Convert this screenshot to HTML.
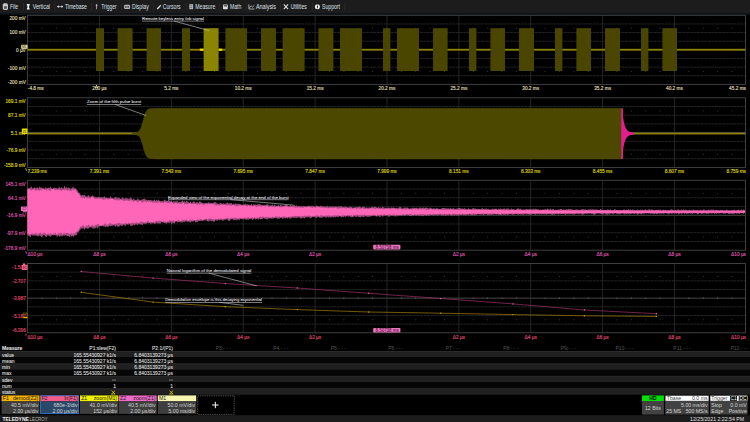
<!DOCTYPE html>
<html><head><meta charset="utf-8"><style>
html,body{margin:0;padding:0;background:#000;width:750px;height:422px;overflow:hidden;position:relative;font-family:"Liberation Sans", sans-serif;}
.ab{position:absolute;white-space:nowrap;line-height:1;}
</style></head><body>
<div class="ab" style="left:0;top:0;width:750px;height:13.5px;background:#1b1b1b;border-bottom:0.8px solid #0d1014"></div>
<svg style="position:absolute;left:0;top:0" width="750" height="422" viewBox="0 0 750 422"><line x1="27.4" y1="23.94" x2="745.5" y2="23.94" stroke="#2e2e2e" stroke-width="0.75" stroke-dasharray="3.1 0.5"/><line x1="27.4" y1="32.58" x2="745.5" y2="32.58" stroke="#2e2e2e" stroke-width="0.75" stroke-dasharray="3.1 0.5"/><line x1="27.4" y1="41.21" x2="745.5" y2="41.21" stroke="#2e2e2e" stroke-width="0.75" stroke-dasharray="3.1 0.5"/><line x1="27.4" y1="49.85" x2="745.5" y2="49.85" stroke="#5a5a5a" stroke-width="0.8"/><line x1="27.4" y1="58.49" x2="745.5" y2="58.49" stroke="#2e2e2e" stroke-width="0.75" stroke-dasharray="3.1 0.5"/><line x1="27.4" y1="67.12" x2="745.5" y2="67.12" stroke="#2e2e2e" stroke-width="0.75" stroke-dasharray="3.1 0.5"/><line x1="27.4" y1="75.76" x2="745.5" y2="75.76" stroke="#2e2e2e" stroke-width="0.75" stroke-dasharray="3.1 0.5"/><line x1="99.47" y1="15.3" x2="99.47" y2="84.4" stroke="#333333" stroke-width="0.7"/><line x1="171.35" y1="15.3" x2="171.35" y2="84.4" stroke="#333333" stroke-width="0.7"/><line x1="243.22" y1="15.3" x2="243.22" y2="84.4" stroke="#333333" stroke-width="0.7"/><line x1="315.10" y1="15.3" x2="315.10" y2="84.4" stroke="#333333" stroke-width="0.7"/><line x1="386.98" y1="15.3" x2="386.98" y2="84.4" stroke="#333333" stroke-width="0.7"/><line x1="458.85" y1="15.3" x2="458.85" y2="84.4" stroke="#333333" stroke-width="0.7"/><line x1="530.73" y1="15.3" x2="530.73" y2="84.4" stroke="#333333" stroke-width="0.7"/><line x1="602.60" y1="15.3" x2="602.60" y2="84.4" stroke="#333333" stroke-width="0.7"/><line x1="674.48" y1="15.3" x2="674.48" y2="84.4" stroke="#333333" stroke-width="0.7"/><rect x="41.48" y="27.76" width="1" height="1" fill="#3a3a3a"/><rect x="55.85" y="27.76" width="1" height="1" fill="#3a3a3a"/><rect x="70.22" y="27.76" width="1" height="1" fill="#3a3a3a"/><rect x="84.60" y="27.76" width="1" height="1" fill="#3a3a3a"/><rect x="113.35" y="27.76" width="1" height="1" fill="#3a3a3a"/><rect x="127.72" y="27.76" width="1" height="1" fill="#3a3a3a"/><rect x="142.10" y="27.76" width="1" height="1" fill="#3a3a3a"/><rect x="156.47" y="27.76" width="1" height="1" fill="#3a3a3a"/><rect x="185.22" y="27.76" width="1" height="1" fill="#3a3a3a"/><rect x="199.60" y="27.76" width="1" height="1" fill="#3a3a3a"/><rect x="213.97" y="27.76" width="1" height="1" fill="#3a3a3a"/><rect x="228.35" y="27.76" width="1" height="1" fill="#3a3a3a"/><rect x="257.10" y="27.76" width="1" height="1" fill="#3a3a3a"/><rect x="271.48" y="27.76" width="1" height="1" fill="#3a3a3a"/><rect x="285.85" y="27.76" width="1" height="1" fill="#3a3a3a"/><rect x="300.23" y="27.76" width="1" height="1" fill="#3a3a3a"/><rect x="328.98" y="27.76" width="1" height="1" fill="#3a3a3a"/><rect x="343.35" y="27.76" width="1" height="1" fill="#3a3a3a"/><rect x="357.73" y="27.76" width="1" height="1" fill="#3a3a3a"/><rect x="372.10" y="27.76" width="1" height="1" fill="#3a3a3a"/><rect x="400.85" y="27.76" width="1" height="1" fill="#3a3a3a"/><rect x="415.23" y="27.76" width="1" height="1" fill="#3a3a3a"/><rect x="429.60" y="27.76" width="1" height="1" fill="#3a3a3a"/><rect x="443.98" y="27.76" width="1" height="1" fill="#3a3a3a"/><rect x="472.73" y="27.76" width="1" height="1" fill="#3a3a3a"/><rect x="487.10" y="27.76" width="1" height="1" fill="#3a3a3a"/><rect x="501.48" y="27.76" width="1" height="1" fill="#3a3a3a"/><rect x="515.85" y="27.76" width="1" height="1" fill="#3a3a3a"/><rect x="544.60" y="27.76" width="1" height="1" fill="#3a3a3a"/><rect x="558.98" y="27.76" width="1" height="1" fill="#3a3a3a"/><rect x="573.35" y="27.76" width="1" height="1" fill="#3a3a3a"/><rect x="587.73" y="27.76" width="1" height="1" fill="#3a3a3a"/><rect x="616.48" y="27.76" width="1" height="1" fill="#3a3a3a"/><rect x="630.85" y="27.76" width="1" height="1" fill="#3a3a3a"/><rect x="645.23" y="27.76" width="1" height="1" fill="#3a3a3a"/><rect x="659.60" y="27.76" width="1" height="1" fill="#3a3a3a"/><rect x="688.35" y="27.76" width="1" height="1" fill="#3a3a3a"/><rect x="702.73" y="27.76" width="1" height="1" fill="#3a3a3a"/><rect x="717.10" y="27.76" width="1" height="1" fill="#3a3a3a"/><rect x="731.48" y="27.76" width="1" height="1" fill="#3a3a3a"/><rect x="41.48" y="70.94" width="1" height="1" fill="#3a3a3a"/><rect x="55.85" y="70.94" width="1" height="1" fill="#3a3a3a"/><rect x="70.22" y="70.94" width="1" height="1" fill="#3a3a3a"/><rect x="84.60" y="70.94" width="1" height="1" fill="#3a3a3a"/><rect x="113.35" y="70.94" width="1" height="1" fill="#3a3a3a"/><rect x="127.72" y="70.94" width="1" height="1" fill="#3a3a3a"/><rect x="142.10" y="70.94" width="1" height="1" fill="#3a3a3a"/><rect x="156.47" y="70.94" width="1" height="1" fill="#3a3a3a"/><rect x="185.22" y="70.94" width="1" height="1" fill="#3a3a3a"/><rect x="199.60" y="70.94" width="1" height="1" fill="#3a3a3a"/><rect x="213.97" y="70.94" width="1" height="1" fill="#3a3a3a"/><rect x="228.35" y="70.94" width="1" height="1" fill="#3a3a3a"/><rect x="257.10" y="70.94" width="1" height="1" fill="#3a3a3a"/><rect x="271.48" y="70.94" width="1" height="1" fill="#3a3a3a"/><rect x="285.85" y="70.94" width="1" height="1" fill="#3a3a3a"/><rect x="300.23" y="70.94" width="1" height="1" fill="#3a3a3a"/><rect x="328.98" y="70.94" width="1" height="1" fill="#3a3a3a"/><rect x="343.35" y="70.94" width="1" height="1" fill="#3a3a3a"/><rect x="357.73" y="70.94" width="1" height="1" fill="#3a3a3a"/><rect x="372.10" y="70.94" width="1" height="1" fill="#3a3a3a"/><rect x="400.85" y="70.94" width="1" height="1" fill="#3a3a3a"/><rect x="415.23" y="70.94" width="1" height="1" fill="#3a3a3a"/><rect x="429.60" y="70.94" width="1" height="1" fill="#3a3a3a"/><rect x="443.98" y="70.94" width="1" height="1" fill="#3a3a3a"/><rect x="472.73" y="70.94" width="1" height="1" fill="#3a3a3a"/><rect x="487.10" y="70.94" width="1" height="1" fill="#3a3a3a"/><rect x="501.48" y="70.94" width="1" height="1" fill="#3a3a3a"/><rect x="515.85" y="70.94" width="1" height="1" fill="#3a3a3a"/><rect x="544.60" y="70.94" width="1" height="1" fill="#3a3a3a"/><rect x="558.98" y="70.94" width="1" height="1" fill="#3a3a3a"/><rect x="573.35" y="70.94" width="1" height="1" fill="#3a3a3a"/><rect x="587.73" y="70.94" width="1" height="1" fill="#3a3a3a"/><rect x="616.48" y="70.94" width="1" height="1" fill="#3a3a3a"/><rect x="630.85" y="70.94" width="1" height="1" fill="#3a3a3a"/><rect x="645.23" y="70.94" width="1" height="1" fill="#3a3a3a"/><rect x="659.60" y="70.94" width="1" height="1" fill="#3a3a3a"/><rect x="688.35" y="70.94" width="1" height="1" fill="#3a3a3a"/><rect x="702.73" y="70.94" width="1" height="1" fill="#3a3a3a"/><rect x="717.10" y="70.94" width="1" height="1" fill="#3a3a3a"/><rect x="731.48" y="70.94" width="1" height="1" fill="#3a3a3a"/><rect x="27.4" y="15.3" width="718.1" height="69.10000000000001" fill="none" stroke="#464646" stroke-width="0.9"/><line x1="27.4" y1="106.50" x2="745.5" y2="106.50" stroke="#2e2e2e" stroke-width="0.75" stroke-dasharray="3.1 0.5"/><line x1="27.4" y1="115.20" x2="745.5" y2="115.20" stroke="#2e2e2e" stroke-width="0.75" stroke-dasharray="3.1 0.5"/><line x1="27.4" y1="123.90" x2="745.5" y2="123.90" stroke="#2e2e2e" stroke-width="0.75" stroke-dasharray="3.1 0.5"/><line x1="27.4" y1="132.60" x2="745.5" y2="132.60" stroke="#5a5a5a" stroke-width="0.8"/><line x1="27.4" y1="141.30" x2="745.5" y2="141.30" stroke="#2e2e2e" stroke-width="0.75" stroke-dasharray="3.1 0.5"/><line x1="27.4" y1="150.00" x2="745.5" y2="150.00" stroke="#2e2e2e" stroke-width="0.75" stroke-dasharray="3.1 0.5"/><line x1="27.4" y1="158.70" x2="745.5" y2="158.70" stroke="#2e2e2e" stroke-width="0.75" stroke-dasharray="3.1 0.5"/><line x1="99.47" y1="97.8" x2="99.47" y2="167.4" stroke="#333333" stroke-width="0.7"/><line x1="171.35" y1="97.8" x2="171.35" y2="167.4" stroke="#333333" stroke-width="0.7"/><line x1="243.22" y1="97.8" x2="243.22" y2="167.4" stroke="#333333" stroke-width="0.7"/><line x1="315.10" y1="97.8" x2="315.10" y2="167.4" stroke="#333333" stroke-width="0.7"/><line x1="386.98" y1="97.8" x2="386.98" y2="167.4" stroke="#333333" stroke-width="0.7"/><line x1="458.85" y1="97.8" x2="458.85" y2="167.4" stroke="#333333" stroke-width="0.7"/><line x1="530.73" y1="97.8" x2="530.73" y2="167.4" stroke="#333333" stroke-width="0.7"/><line x1="602.60" y1="97.8" x2="602.60" y2="167.4" stroke="#333333" stroke-width="0.7"/><line x1="674.48" y1="97.8" x2="674.48" y2="167.4" stroke="#333333" stroke-width="0.7"/><rect x="41.48" y="110.35" width="1" height="1" fill="#3a3a3a"/><rect x="55.85" y="110.35" width="1" height="1" fill="#3a3a3a"/><rect x="70.22" y="110.35" width="1" height="1" fill="#3a3a3a"/><rect x="84.60" y="110.35" width="1" height="1" fill="#3a3a3a"/><rect x="113.35" y="110.35" width="1" height="1" fill="#3a3a3a"/><rect x="127.72" y="110.35" width="1" height="1" fill="#3a3a3a"/><rect x="142.10" y="110.35" width="1" height="1" fill="#3a3a3a"/><rect x="156.47" y="110.35" width="1" height="1" fill="#3a3a3a"/><rect x="185.22" y="110.35" width="1" height="1" fill="#3a3a3a"/><rect x="199.60" y="110.35" width="1" height="1" fill="#3a3a3a"/><rect x="213.97" y="110.35" width="1" height="1" fill="#3a3a3a"/><rect x="228.35" y="110.35" width="1" height="1" fill="#3a3a3a"/><rect x="257.10" y="110.35" width="1" height="1" fill="#3a3a3a"/><rect x="271.48" y="110.35" width="1" height="1" fill="#3a3a3a"/><rect x="285.85" y="110.35" width="1" height="1" fill="#3a3a3a"/><rect x="300.23" y="110.35" width="1" height="1" fill="#3a3a3a"/><rect x="328.98" y="110.35" width="1" height="1" fill="#3a3a3a"/><rect x="343.35" y="110.35" width="1" height="1" fill="#3a3a3a"/><rect x="357.73" y="110.35" width="1" height="1" fill="#3a3a3a"/><rect x="372.10" y="110.35" width="1" height="1" fill="#3a3a3a"/><rect x="400.85" y="110.35" width="1" height="1" fill="#3a3a3a"/><rect x="415.23" y="110.35" width="1" height="1" fill="#3a3a3a"/><rect x="429.60" y="110.35" width="1" height="1" fill="#3a3a3a"/><rect x="443.98" y="110.35" width="1" height="1" fill="#3a3a3a"/><rect x="472.73" y="110.35" width="1" height="1" fill="#3a3a3a"/><rect x="487.10" y="110.35" width="1" height="1" fill="#3a3a3a"/><rect x="501.48" y="110.35" width="1" height="1" fill="#3a3a3a"/><rect x="515.85" y="110.35" width="1" height="1" fill="#3a3a3a"/><rect x="544.60" y="110.35" width="1" height="1" fill="#3a3a3a"/><rect x="558.98" y="110.35" width="1" height="1" fill="#3a3a3a"/><rect x="573.35" y="110.35" width="1" height="1" fill="#3a3a3a"/><rect x="587.73" y="110.35" width="1" height="1" fill="#3a3a3a"/><rect x="616.48" y="110.35" width="1" height="1" fill="#3a3a3a"/><rect x="630.85" y="110.35" width="1" height="1" fill="#3a3a3a"/><rect x="645.23" y="110.35" width="1" height="1" fill="#3a3a3a"/><rect x="659.60" y="110.35" width="1" height="1" fill="#3a3a3a"/><rect x="688.35" y="110.35" width="1" height="1" fill="#3a3a3a"/><rect x="702.73" y="110.35" width="1" height="1" fill="#3a3a3a"/><rect x="717.10" y="110.35" width="1" height="1" fill="#3a3a3a"/><rect x="731.48" y="110.35" width="1" height="1" fill="#3a3a3a"/><rect x="41.48" y="153.85" width="1" height="1" fill="#3a3a3a"/><rect x="55.85" y="153.85" width="1" height="1" fill="#3a3a3a"/><rect x="70.22" y="153.85" width="1" height="1" fill="#3a3a3a"/><rect x="84.60" y="153.85" width="1" height="1" fill="#3a3a3a"/><rect x="113.35" y="153.85" width="1" height="1" fill="#3a3a3a"/><rect x="127.72" y="153.85" width="1" height="1" fill="#3a3a3a"/><rect x="142.10" y="153.85" width="1" height="1" fill="#3a3a3a"/><rect x="156.47" y="153.85" width="1" height="1" fill="#3a3a3a"/><rect x="185.22" y="153.85" width="1" height="1" fill="#3a3a3a"/><rect x="199.60" y="153.85" width="1" height="1" fill="#3a3a3a"/><rect x="213.97" y="153.85" width="1" height="1" fill="#3a3a3a"/><rect x="228.35" y="153.85" width="1" height="1" fill="#3a3a3a"/><rect x="257.10" y="153.85" width="1" height="1" fill="#3a3a3a"/><rect x="271.48" y="153.85" width="1" height="1" fill="#3a3a3a"/><rect x="285.85" y="153.85" width="1" height="1" fill="#3a3a3a"/><rect x="300.23" y="153.85" width="1" height="1" fill="#3a3a3a"/><rect x="328.98" y="153.85" width="1" height="1" fill="#3a3a3a"/><rect x="343.35" y="153.85" width="1" height="1" fill="#3a3a3a"/><rect x="357.73" y="153.85" width="1" height="1" fill="#3a3a3a"/><rect x="372.10" y="153.85" width="1" height="1" fill="#3a3a3a"/><rect x="400.85" y="153.85" width="1" height="1" fill="#3a3a3a"/><rect x="415.23" y="153.85" width="1" height="1" fill="#3a3a3a"/><rect x="429.60" y="153.85" width="1" height="1" fill="#3a3a3a"/><rect x="443.98" y="153.85" width="1" height="1" fill="#3a3a3a"/><rect x="472.73" y="153.85" width="1" height="1" fill="#3a3a3a"/><rect x="487.10" y="153.85" width="1" height="1" fill="#3a3a3a"/><rect x="501.48" y="153.85" width="1" height="1" fill="#3a3a3a"/><rect x="515.85" y="153.85" width="1" height="1" fill="#3a3a3a"/><rect x="544.60" y="153.85" width="1" height="1" fill="#3a3a3a"/><rect x="558.98" y="153.85" width="1" height="1" fill="#3a3a3a"/><rect x="573.35" y="153.85" width="1" height="1" fill="#3a3a3a"/><rect x="587.73" y="153.85" width="1" height="1" fill="#3a3a3a"/><rect x="616.48" y="153.85" width="1" height="1" fill="#3a3a3a"/><rect x="630.85" y="153.85" width="1" height="1" fill="#3a3a3a"/><rect x="645.23" y="153.85" width="1" height="1" fill="#3a3a3a"/><rect x="659.60" y="153.85" width="1" height="1" fill="#3a3a3a"/><rect x="688.35" y="153.85" width="1" height="1" fill="#3a3a3a"/><rect x="702.73" y="153.85" width="1" height="1" fill="#3a3a3a"/><rect x="717.10" y="153.85" width="1" height="1" fill="#3a3a3a"/><rect x="731.48" y="153.85" width="1" height="1" fill="#3a3a3a"/><rect x="27.4" y="97.8" width="718.1" height="69.60000000000001" fill="none" stroke="#464646" stroke-width="0.9"/><line x1="27.4" y1="189.04" x2="745.5" y2="189.04" stroke="#2e2e2e" stroke-width="0.75" stroke-dasharray="3.1 0.5"/><line x1="27.4" y1="197.78" x2="745.5" y2="197.78" stroke="#2e2e2e" stroke-width="0.75" stroke-dasharray="3.1 0.5"/><line x1="27.4" y1="206.51" x2="745.5" y2="206.51" stroke="#2e2e2e" stroke-width="0.75" stroke-dasharray="3.1 0.5"/><line x1="27.4" y1="215.25" x2="745.5" y2="215.25" stroke="#5a5a5a" stroke-width="0.8"/><line x1="27.4" y1="223.99" x2="745.5" y2="223.99" stroke="#2e2e2e" stroke-width="0.75" stroke-dasharray="3.1 0.5"/><line x1="27.4" y1="232.72" x2="745.5" y2="232.72" stroke="#2e2e2e" stroke-width="0.75" stroke-dasharray="3.1 0.5"/><line x1="27.4" y1="241.46" x2="745.5" y2="241.46" stroke="#2e2e2e" stroke-width="0.75" stroke-dasharray="3.1 0.5"/><line x1="99.47" y1="180.3" x2="99.47" y2="250.2" stroke="#333333" stroke-width="0.7"/><line x1="171.35" y1="180.3" x2="171.35" y2="250.2" stroke="#333333" stroke-width="0.7"/><line x1="243.22" y1="180.3" x2="243.22" y2="250.2" stroke="#333333" stroke-width="0.7"/><line x1="315.10" y1="180.3" x2="315.10" y2="250.2" stroke="#333333" stroke-width="0.7"/><line x1="386.98" y1="180.3" x2="386.98" y2="250.2" stroke="#333333" stroke-width="0.7"/><line x1="458.85" y1="180.3" x2="458.85" y2="250.2" stroke="#333333" stroke-width="0.7"/><line x1="530.73" y1="180.3" x2="530.73" y2="250.2" stroke="#333333" stroke-width="0.7"/><line x1="602.60" y1="180.3" x2="602.60" y2="250.2" stroke="#333333" stroke-width="0.7"/><line x1="674.48" y1="180.3" x2="674.48" y2="250.2" stroke="#333333" stroke-width="0.7"/><rect x="41.48" y="192.91" width="1" height="1" fill="#3a3a3a"/><rect x="55.85" y="192.91" width="1" height="1" fill="#3a3a3a"/><rect x="70.22" y="192.91" width="1" height="1" fill="#3a3a3a"/><rect x="84.60" y="192.91" width="1" height="1" fill="#3a3a3a"/><rect x="113.35" y="192.91" width="1" height="1" fill="#3a3a3a"/><rect x="127.72" y="192.91" width="1" height="1" fill="#3a3a3a"/><rect x="142.10" y="192.91" width="1" height="1" fill="#3a3a3a"/><rect x="156.47" y="192.91" width="1" height="1" fill="#3a3a3a"/><rect x="185.22" y="192.91" width="1" height="1" fill="#3a3a3a"/><rect x="199.60" y="192.91" width="1" height="1" fill="#3a3a3a"/><rect x="213.97" y="192.91" width="1" height="1" fill="#3a3a3a"/><rect x="228.35" y="192.91" width="1" height="1" fill="#3a3a3a"/><rect x="257.10" y="192.91" width="1" height="1" fill="#3a3a3a"/><rect x="271.48" y="192.91" width="1" height="1" fill="#3a3a3a"/><rect x="285.85" y="192.91" width="1" height="1" fill="#3a3a3a"/><rect x="300.23" y="192.91" width="1" height="1" fill="#3a3a3a"/><rect x="328.98" y="192.91" width="1" height="1" fill="#3a3a3a"/><rect x="343.35" y="192.91" width="1" height="1" fill="#3a3a3a"/><rect x="357.73" y="192.91" width="1" height="1" fill="#3a3a3a"/><rect x="372.10" y="192.91" width="1" height="1" fill="#3a3a3a"/><rect x="400.85" y="192.91" width="1" height="1" fill="#3a3a3a"/><rect x="415.23" y="192.91" width="1" height="1" fill="#3a3a3a"/><rect x="429.60" y="192.91" width="1" height="1" fill="#3a3a3a"/><rect x="443.98" y="192.91" width="1" height="1" fill="#3a3a3a"/><rect x="472.73" y="192.91" width="1" height="1" fill="#3a3a3a"/><rect x="487.10" y="192.91" width="1" height="1" fill="#3a3a3a"/><rect x="501.48" y="192.91" width="1" height="1" fill="#3a3a3a"/><rect x="515.85" y="192.91" width="1" height="1" fill="#3a3a3a"/><rect x="544.60" y="192.91" width="1" height="1" fill="#3a3a3a"/><rect x="558.98" y="192.91" width="1" height="1" fill="#3a3a3a"/><rect x="573.35" y="192.91" width="1" height="1" fill="#3a3a3a"/><rect x="587.73" y="192.91" width="1" height="1" fill="#3a3a3a"/><rect x="616.48" y="192.91" width="1" height="1" fill="#3a3a3a"/><rect x="630.85" y="192.91" width="1" height="1" fill="#3a3a3a"/><rect x="645.23" y="192.91" width="1" height="1" fill="#3a3a3a"/><rect x="659.60" y="192.91" width="1" height="1" fill="#3a3a3a"/><rect x="688.35" y="192.91" width="1" height="1" fill="#3a3a3a"/><rect x="702.73" y="192.91" width="1" height="1" fill="#3a3a3a"/><rect x="717.10" y="192.91" width="1" height="1" fill="#3a3a3a"/><rect x="731.48" y="192.91" width="1" height="1" fill="#3a3a3a"/><rect x="41.48" y="236.59" width="1" height="1" fill="#3a3a3a"/><rect x="55.85" y="236.59" width="1" height="1" fill="#3a3a3a"/><rect x="70.22" y="236.59" width="1" height="1" fill="#3a3a3a"/><rect x="84.60" y="236.59" width="1" height="1" fill="#3a3a3a"/><rect x="113.35" y="236.59" width="1" height="1" fill="#3a3a3a"/><rect x="127.72" y="236.59" width="1" height="1" fill="#3a3a3a"/><rect x="142.10" y="236.59" width="1" height="1" fill="#3a3a3a"/><rect x="156.47" y="236.59" width="1" height="1" fill="#3a3a3a"/><rect x="185.22" y="236.59" width="1" height="1" fill="#3a3a3a"/><rect x="199.60" y="236.59" width="1" height="1" fill="#3a3a3a"/><rect x="213.97" y="236.59" width="1" height="1" fill="#3a3a3a"/><rect x="228.35" y="236.59" width="1" height="1" fill="#3a3a3a"/><rect x="257.10" y="236.59" width="1" height="1" fill="#3a3a3a"/><rect x="271.48" y="236.59" width="1" height="1" fill="#3a3a3a"/><rect x="285.85" y="236.59" width="1" height="1" fill="#3a3a3a"/><rect x="300.23" y="236.59" width="1" height="1" fill="#3a3a3a"/><rect x="328.98" y="236.59" width="1" height="1" fill="#3a3a3a"/><rect x="343.35" y="236.59" width="1" height="1" fill="#3a3a3a"/><rect x="357.73" y="236.59" width="1" height="1" fill="#3a3a3a"/><rect x="372.10" y="236.59" width="1" height="1" fill="#3a3a3a"/><rect x="400.85" y="236.59" width="1" height="1" fill="#3a3a3a"/><rect x="415.23" y="236.59" width="1" height="1" fill="#3a3a3a"/><rect x="429.60" y="236.59" width="1" height="1" fill="#3a3a3a"/><rect x="443.98" y="236.59" width="1" height="1" fill="#3a3a3a"/><rect x="472.73" y="236.59" width="1" height="1" fill="#3a3a3a"/><rect x="487.10" y="236.59" width="1" height="1" fill="#3a3a3a"/><rect x="501.48" y="236.59" width="1" height="1" fill="#3a3a3a"/><rect x="515.85" y="236.59" width="1" height="1" fill="#3a3a3a"/><rect x="544.60" y="236.59" width="1" height="1" fill="#3a3a3a"/><rect x="558.98" y="236.59" width="1" height="1" fill="#3a3a3a"/><rect x="573.35" y="236.59" width="1" height="1" fill="#3a3a3a"/><rect x="587.73" y="236.59" width="1" height="1" fill="#3a3a3a"/><rect x="616.48" y="236.59" width="1" height="1" fill="#3a3a3a"/><rect x="630.85" y="236.59" width="1" height="1" fill="#3a3a3a"/><rect x="645.23" y="236.59" width="1" height="1" fill="#3a3a3a"/><rect x="659.60" y="236.59" width="1" height="1" fill="#3a3a3a"/><rect x="688.35" y="236.59" width="1" height="1" fill="#3a3a3a"/><rect x="702.73" y="236.59" width="1" height="1" fill="#3a3a3a"/><rect x="717.10" y="236.59" width="1" height="1" fill="#3a3a3a"/><rect x="731.48" y="236.59" width="1" height="1" fill="#3a3a3a"/><rect x="27.4" y="180.3" width="718.1" height="69.89999999999998" fill="none" stroke="#464646" stroke-width="0.9"/><line x1="27.4" y1="272.16" x2="745.5" y2="272.16" stroke="#2e2e2e" stroke-width="0.75" stroke-dasharray="3.1 0.5"/><line x1="27.4" y1="280.82" x2="745.5" y2="280.82" stroke="#2e2e2e" stroke-width="0.75" stroke-dasharray="3.1 0.5"/><line x1="27.4" y1="289.49" x2="745.5" y2="289.49" stroke="#2e2e2e" stroke-width="0.75" stroke-dasharray="3.1 0.5"/><line x1="27.4" y1="298.15" x2="745.5" y2="298.15" stroke="#5a5a5a" stroke-width="0.8"/><line x1="27.4" y1="306.81" x2="745.5" y2="306.81" stroke="#2e2e2e" stroke-width="0.75" stroke-dasharray="3.1 0.5"/><line x1="27.4" y1="315.48" x2="745.5" y2="315.48" stroke="#2e2e2e" stroke-width="0.75" stroke-dasharray="3.1 0.5"/><line x1="27.4" y1="324.14" x2="745.5" y2="324.14" stroke="#2e2e2e" stroke-width="0.75" stroke-dasharray="3.1 0.5"/><line x1="99.47" y1="263.5" x2="99.47" y2="332.8" stroke="#333333" stroke-width="0.7"/><line x1="171.35" y1="263.5" x2="171.35" y2="332.8" stroke="#333333" stroke-width="0.7"/><line x1="243.22" y1="263.5" x2="243.22" y2="332.8" stroke="#333333" stroke-width="0.7"/><line x1="315.10" y1="263.5" x2="315.10" y2="332.8" stroke="#333333" stroke-width="0.7"/><line x1="386.98" y1="263.5" x2="386.98" y2="332.8" stroke="#333333" stroke-width="0.7"/><line x1="458.85" y1="263.5" x2="458.85" y2="332.8" stroke="#333333" stroke-width="0.7"/><line x1="530.73" y1="263.5" x2="530.73" y2="332.8" stroke="#333333" stroke-width="0.7"/><line x1="602.60" y1="263.5" x2="602.60" y2="332.8" stroke="#333333" stroke-width="0.7"/><line x1="674.48" y1="263.5" x2="674.48" y2="332.8" stroke="#333333" stroke-width="0.7"/><rect x="41.48" y="275.99" width="1" height="1" fill="#3a3a3a"/><rect x="55.85" y="275.99" width="1" height="1" fill="#3a3a3a"/><rect x="70.22" y="275.99" width="1" height="1" fill="#3a3a3a"/><rect x="84.60" y="275.99" width="1" height="1" fill="#3a3a3a"/><rect x="113.35" y="275.99" width="1" height="1" fill="#3a3a3a"/><rect x="127.72" y="275.99" width="1" height="1" fill="#3a3a3a"/><rect x="142.10" y="275.99" width="1" height="1" fill="#3a3a3a"/><rect x="156.47" y="275.99" width="1" height="1" fill="#3a3a3a"/><rect x="185.22" y="275.99" width="1" height="1" fill="#3a3a3a"/><rect x="199.60" y="275.99" width="1" height="1" fill="#3a3a3a"/><rect x="213.97" y="275.99" width="1" height="1" fill="#3a3a3a"/><rect x="228.35" y="275.99" width="1" height="1" fill="#3a3a3a"/><rect x="257.10" y="275.99" width="1" height="1" fill="#3a3a3a"/><rect x="271.48" y="275.99" width="1" height="1" fill="#3a3a3a"/><rect x="285.85" y="275.99" width="1" height="1" fill="#3a3a3a"/><rect x="300.23" y="275.99" width="1" height="1" fill="#3a3a3a"/><rect x="328.98" y="275.99" width="1" height="1" fill="#3a3a3a"/><rect x="343.35" y="275.99" width="1" height="1" fill="#3a3a3a"/><rect x="357.73" y="275.99" width="1" height="1" fill="#3a3a3a"/><rect x="372.10" y="275.99" width="1" height="1" fill="#3a3a3a"/><rect x="400.85" y="275.99" width="1" height="1" fill="#3a3a3a"/><rect x="415.23" y="275.99" width="1" height="1" fill="#3a3a3a"/><rect x="429.60" y="275.99" width="1" height="1" fill="#3a3a3a"/><rect x="443.98" y="275.99" width="1" height="1" fill="#3a3a3a"/><rect x="472.73" y="275.99" width="1" height="1" fill="#3a3a3a"/><rect x="487.10" y="275.99" width="1" height="1" fill="#3a3a3a"/><rect x="501.48" y="275.99" width="1" height="1" fill="#3a3a3a"/><rect x="515.85" y="275.99" width="1" height="1" fill="#3a3a3a"/><rect x="544.60" y="275.99" width="1" height="1" fill="#3a3a3a"/><rect x="558.98" y="275.99" width="1" height="1" fill="#3a3a3a"/><rect x="573.35" y="275.99" width="1" height="1" fill="#3a3a3a"/><rect x="587.73" y="275.99" width="1" height="1" fill="#3a3a3a"/><rect x="616.48" y="275.99" width="1" height="1" fill="#3a3a3a"/><rect x="630.85" y="275.99" width="1" height="1" fill="#3a3a3a"/><rect x="645.23" y="275.99" width="1" height="1" fill="#3a3a3a"/><rect x="659.60" y="275.99" width="1" height="1" fill="#3a3a3a"/><rect x="688.35" y="275.99" width="1" height="1" fill="#3a3a3a"/><rect x="702.73" y="275.99" width="1" height="1" fill="#3a3a3a"/><rect x="717.10" y="275.99" width="1" height="1" fill="#3a3a3a"/><rect x="731.48" y="275.99" width="1" height="1" fill="#3a3a3a"/><rect x="41.48" y="319.31" width="1" height="1" fill="#3a3a3a"/><rect x="55.85" y="319.31" width="1" height="1" fill="#3a3a3a"/><rect x="70.22" y="319.31" width="1" height="1" fill="#3a3a3a"/><rect x="84.60" y="319.31" width="1" height="1" fill="#3a3a3a"/><rect x="113.35" y="319.31" width="1" height="1" fill="#3a3a3a"/><rect x="127.72" y="319.31" width="1" height="1" fill="#3a3a3a"/><rect x="142.10" y="319.31" width="1" height="1" fill="#3a3a3a"/><rect x="156.47" y="319.31" width="1" height="1" fill="#3a3a3a"/><rect x="185.22" y="319.31" width="1" height="1" fill="#3a3a3a"/><rect x="199.60" y="319.31" width="1" height="1" fill="#3a3a3a"/><rect x="213.97" y="319.31" width="1" height="1" fill="#3a3a3a"/><rect x="228.35" y="319.31" width="1" height="1" fill="#3a3a3a"/><rect x="257.10" y="319.31" width="1" height="1" fill="#3a3a3a"/><rect x="271.48" y="319.31" width="1" height="1" fill="#3a3a3a"/><rect x="285.85" y="319.31" width="1" height="1" fill="#3a3a3a"/><rect x="300.23" y="319.31" width="1" height="1" fill="#3a3a3a"/><rect x="328.98" y="319.31" width="1" height="1" fill="#3a3a3a"/><rect x="343.35" y="319.31" width="1" height="1" fill="#3a3a3a"/><rect x="357.73" y="319.31" width="1" height="1" fill="#3a3a3a"/><rect x="372.10" y="319.31" width="1" height="1" fill="#3a3a3a"/><rect x="400.85" y="319.31" width="1" height="1" fill="#3a3a3a"/><rect x="415.23" y="319.31" width="1" height="1" fill="#3a3a3a"/><rect x="429.60" y="319.31" width="1" height="1" fill="#3a3a3a"/><rect x="443.98" y="319.31" width="1" height="1" fill="#3a3a3a"/><rect x="472.73" y="319.31" width="1" height="1" fill="#3a3a3a"/><rect x="487.10" y="319.31" width="1" height="1" fill="#3a3a3a"/><rect x="501.48" y="319.31" width="1" height="1" fill="#3a3a3a"/><rect x="515.85" y="319.31" width="1" height="1" fill="#3a3a3a"/><rect x="544.60" y="319.31" width="1" height="1" fill="#3a3a3a"/><rect x="558.98" y="319.31" width="1" height="1" fill="#3a3a3a"/><rect x="573.35" y="319.31" width="1" height="1" fill="#3a3a3a"/><rect x="587.73" y="319.31" width="1" height="1" fill="#3a3a3a"/><rect x="616.48" y="319.31" width="1" height="1" fill="#3a3a3a"/><rect x="630.85" y="319.31" width="1" height="1" fill="#3a3a3a"/><rect x="645.23" y="319.31" width="1" height="1" fill="#3a3a3a"/><rect x="659.60" y="319.31" width="1" height="1" fill="#3a3a3a"/><rect x="688.35" y="319.31" width="1" height="1" fill="#3a3a3a"/><rect x="702.73" y="319.31" width="1" height="1" fill="#3a3a3a"/><rect x="717.10" y="319.31" width="1" height="1" fill="#3a3a3a"/><rect x="731.48" y="319.31" width="1" height="1" fill="#3a3a3a"/><rect x="41.58" y="297.35" width="0.8" height="1.6" fill="#5a5a5a"/><rect x="55.95" y="297.35" width="0.8" height="1.6" fill="#5a5a5a"/><rect x="70.32" y="297.35" width="0.8" height="1.6" fill="#5a5a5a"/><rect x="84.70" y="297.35" width="0.8" height="1.6" fill="#5a5a5a"/><rect x="113.45" y="297.35" width="0.8" height="1.6" fill="#5a5a5a"/><rect x="127.82" y="297.35" width="0.8" height="1.6" fill="#5a5a5a"/><rect x="142.20" y="297.35" width="0.8" height="1.6" fill="#5a5a5a"/><rect x="156.57" y="297.35" width="0.8" height="1.6" fill="#5a5a5a"/><rect x="185.32" y="297.35" width="0.8" height="1.6" fill="#5a5a5a"/><rect x="199.70" y="297.35" width="0.8" height="1.6" fill="#5a5a5a"/><rect x="214.07" y="297.35" width="0.8" height="1.6" fill="#5a5a5a"/><rect x="228.45" y="297.35" width="0.8" height="1.6" fill="#5a5a5a"/><rect x="257.20" y="297.35" width="0.8" height="1.6" fill="#5a5a5a"/><rect x="271.58" y="297.35" width="0.8" height="1.6" fill="#5a5a5a"/><rect x="285.95" y="297.35" width="0.8" height="1.6" fill="#5a5a5a"/><rect x="300.33" y="297.35" width="0.8" height="1.6" fill="#5a5a5a"/><rect x="329.08" y="297.35" width="0.8" height="1.6" fill="#5a5a5a"/><rect x="343.45" y="297.35" width="0.8" height="1.6" fill="#5a5a5a"/><rect x="357.83" y="297.35" width="0.8" height="1.6" fill="#5a5a5a"/><rect x="372.20" y="297.35" width="0.8" height="1.6" fill="#5a5a5a"/><rect x="400.95" y="297.35" width="0.8" height="1.6" fill="#5a5a5a"/><rect x="415.33" y="297.35" width="0.8" height="1.6" fill="#5a5a5a"/><rect x="429.70" y="297.35" width="0.8" height="1.6" fill="#5a5a5a"/><rect x="444.08" y="297.35" width="0.8" height="1.6" fill="#5a5a5a"/><rect x="472.83" y="297.35" width="0.8" height="1.6" fill="#5a5a5a"/><rect x="487.20" y="297.35" width="0.8" height="1.6" fill="#5a5a5a"/><rect x="501.58" y="297.35" width="0.8" height="1.6" fill="#5a5a5a"/><rect x="515.95" y="297.35" width="0.8" height="1.6" fill="#5a5a5a"/><rect x="544.70" y="297.35" width="0.8" height="1.6" fill="#5a5a5a"/><rect x="559.08" y="297.35" width="0.8" height="1.6" fill="#5a5a5a"/><rect x="573.45" y="297.35" width="0.8" height="1.6" fill="#5a5a5a"/><rect x="587.83" y="297.35" width="0.8" height="1.6" fill="#5a5a5a"/><rect x="616.58" y="297.35" width="0.8" height="1.6" fill="#5a5a5a"/><rect x="630.95" y="297.35" width="0.8" height="1.6" fill="#5a5a5a"/><rect x="645.33" y="297.35" width="0.8" height="1.6" fill="#5a5a5a"/><rect x="659.70" y="297.35" width="0.8" height="1.6" fill="#5a5a5a"/><rect x="688.45" y="297.35" width="0.8" height="1.6" fill="#5a5a5a"/><rect x="702.83" y="297.35" width="0.8" height="1.6" fill="#5a5a5a"/><rect x="717.20" y="297.35" width="0.8" height="1.6" fill="#5a5a5a"/><rect x="731.58" y="297.35" width="0.8" height="1.6" fill="#5a5a5a"/><rect x="27.4" y="263.5" width="718.1" height="69.30000000000001" fill="none" stroke="#464646" stroke-width="0.9"/><rect x="27.4" y="48.80" width="718.1" height="1.8" fill="#8a8200"/><rect x="199.8" y="48.60" width="4" height="2.2" fill="#e8dc00"/><rect x="218.6" y="48.60" width="3.6" height="2.2" fill="#e8dc00"/><rect x="96" y="28.2" width="8.0" height="42.8" fill="#4a4600"/><rect x="117.6" y="28.2" width="15.0" height="42.8" fill="#4a4600"/><rect x="146.6" y="28.2" width="14.4" height="42.8" fill="#4a4600"/><rect x="182" y="28.2" width="8.0" height="42.8" fill="#4a4600"/><rect x="203.6" y="28.2" width="15.0" height="42.8" fill="#8a8400"/><rect x="225.4" y="28.2" width="21.6" height="42.8" fill="#4a4600"/><rect x="261" y="28.2" width="15.0" height="42.8" fill="#4a4600"/><rect x="282.6" y="28.2" width="22.0" height="42.8" fill="#4a4600"/><rect x="318.4" y="28.2" width="15.0" height="42.8" fill="#4a4600"/><rect x="340" y="28.2" width="22.0" height="42.8" fill="#4a4600"/><rect x="383" y="28.2" width="7.4" height="42.8" fill="#4a4600"/><rect x="397" y="28.2" width="22.0" height="42.8" fill="#4a4600"/><rect x="433" y="28.2" width="14.6" height="42.8" fill="#4a4600"/><rect x="469" y="28.2" width="7.4" height="42.8" fill="#4a4600"/><rect x="490.4" y="28.2" width="14.6" height="42.8" fill="#4a4600"/><rect x="519" y="28.2" width="15.0" height="42.8" fill="#4a4600"/><rect x="555" y="28.2" width="7.4" height="42.8" fill="#4a4600"/><rect x="576.4" y="28.2" width="14.6" height="42.8" fill="#4a4600"/><rect x="605" y="28.2" width="15.0" height="42.8" fill="#4a4600"/><rect x="641" y="28.2" width="7.4" height="42.8" fill="#4a4600"/><rect x="662.4" y="28.2" width="14.6" height="42.8" fill="#4a4600"/><rect x="27.4" y="132.75" width="718.1" height="1.7" fill="#8c8400"/><path d="M132.00,132.58 L132.50,132.57 L133.00,132.56 L133.50,132.54 L134.00,132.52 L134.50,132.49 L135.00,132.45 L135.50,132.39 L136.00,132.32 L136.50,132.21 L137.00,132.07 L137.50,131.89 L138.00,131.64 L138.50,131.30 L139.00,130.86 L139.50,130.28 L140.00,129.54 L140.50,128.60 L141.00,127.45 L141.50,126.06 L142.00,124.47 L142.50,122.70 L143.00,120.83 L143.50,118.94 L144.00,117.12 L144.50,115.45 L145.00,113.98 L145.50,112.73 L146.00,111.71 L146.50,110.89 L147.00,110.25 L147.50,109.76 L148.00,109.39 L148.50,109.10 L149.00,108.89 L149.50,108.74 L150.00,108.62 L150.50,108.54 L151.00,108.47 L151.50,108.43 L152.00,108.39 L152.50,108.37 L153.00,108.35 L153.50,108.34 L154.00,108.33 L154.50,108.32 L155.00,108.31 L155.50,108.31 L156.00,108.31 L622.00,108.30 L622.00,159.00 L156.00,158.89 L155.50,158.89 L155.00,158.89 L154.50,158.88 L154.00,158.87 L153.50,158.86 L153.00,158.85 L152.50,158.83 L152.00,158.81 L151.50,158.77 L151.00,158.73 L150.50,158.66 L150.00,158.58 L149.50,158.46 L149.00,158.31 L148.50,158.10 L148.00,157.81 L147.50,157.44 L147.00,156.95 L146.50,156.31 L146.00,155.49 L145.50,154.47 L145.00,153.22 L144.50,151.75 L144.00,150.08 L143.50,148.26 L143.00,146.37 L142.50,144.50 L142.00,142.73 L141.50,141.14 L141.00,139.75 L140.50,138.60 L140.00,137.66 L139.50,136.92 L139.00,136.34 L138.50,135.90 L138.00,135.56 L137.50,135.31 L137.00,135.13 L136.50,134.99 L136.00,134.88 L135.50,134.81 L135.00,134.75 L134.50,134.71 L134.00,134.68 L133.50,134.66 L133.00,134.64 L132.50,134.63 L132.00,134.62 Z" fill="#4c4800" stroke="#555000" stroke-width="0.4"/><path d="M622.00,108.30 L622.40,112.19 L622.80,115.47 L623.20,118.22 L623.60,120.53 L624.00,122.47 L624.40,124.11 L624.80,125.48 L625.20,126.63 L625.60,127.60 L626.00,128.41 L626.40,129.10 L626.80,129.67 L627.20,130.16 L627.60,130.56 L628.00,130.90 L628.40,131.19 L628.80,131.43 L629.20,131.63 L629.60,131.80 L630.00,131.95 L630.40,132.07 L630.80,132.17 L631.20,132.25 L631.60,132.32 L632.00,132.38 L632.40,132.43 L632.80,132.48 L633.20,132.51 L633.60,132.54 L634.00,132.57 L634.00,134.63 L633.60,134.66 L633.20,134.69 L632.80,134.72 L632.40,134.77 L632.00,134.82 L631.60,134.88 L631.20,134.95 L630.80,135.03 L630.40,135.13 L630.00,135.25 L629.60,135.40 L629.20,135.57 L628.80,135.77 L628.40,136.01 L628.00,136.30 L627.60,136.64 L627.20,137.04 L626.80,137.53 L626.40,138.10 L626.00,138.79 L625.60,139.60 L625.20,140.57 L624.80,141.72 L624.40,143.09 L624.00,144.73 L623.60,146.67 L623.20,148.98 L622.80,151.73 L622.40,155.01 L622.00,158.90 Z" fill="#e0208c"/><rect x="621.3" y="108.3" width="1.6" height="50.7" fill="#f01898"/><path d="M27.40,188.22 L28.20,187.68 L29.00,188.68 L29.80,187.98 L30.60,187.41 L31.40,186.19 L32.20,188.56 L33.00,188.50 L33.80,187.65 L34.60,187.24 L35.40,187.91 L36.20,188.39 L37.00,187.08 L37.80,188.00 L38.60,188.68 L39.40,186.57 L40.20,187.55 L41.00,187.85 L41.80,187.35 L42.60,188.08 L43.40,188.52 L44.20,188.58 L45.00,188.64 L45.80,186.77 L46.60,188.14 L47.40,188.51 L48.20,187.52 L49.00,188.12 L49.80,187.74 L50.60,186.48 L51.40,188.06 L52.20,188.66 L53.00,188.18 L53.80,188.62 L54.60,187.45 L55.40,188.13 L56.20,187.87 L57.00,188.18 L57.80,188.69 L58.60,187.66 L59.40,186.61 L60.20,188.52 L61.00,188.21 L61.80,186.65 L62.60,188.42 L63.40,188.69 L64.20,186.27 L65.00,186.27 L65.80,188.47 L66.60,186.70 L67.40,188.64 L68.20,187.01 L69.00,188.20 L69.80,188.04 L70.60,188.58 L71.40,188.55 L72.20,188.16 L73.00,186.21 L73.80,187.96 L74.60,188.37 L75.40,188.36 L76.20,189.01 L77.00,189.98 L77.80,190.85 L78.60,192.97 L79.40,192.50 L80.20,194.17 L81.00,195.79 L81.80,195.09 L82.60,195.00 L83.40,195.52 L84.20,194.86 L85.00,195.36 L85.80,196.39 L86.60,196.51 L87.40,196.47 L88.20,194.57 L89.00,196.11 L89.80,196.65 L90.60,196.66 L91.40,195.89 L92.20,195.75 L93.00,195.29 L93.80,197.10 L94.60,196.49 L95.40,197.10 L96.20,197.23 L97.00,197.31 L97.80,197.36 L98.60,196.72 L99.40,197.19 L100.20,197.51 L101.00,197.22 L101.80,196.84 L102.60,197.46 L103.40,197.62 L104.20,196.07 L105.00,197.34 L105.80,197.51 L106.60,197.43 L107.40,198.06 L108.20,198.11 L109.00,197.86 L109.80,198.13 L110.60,196.02 L111.40,197.97 L112.20,197.66 L113.00,198.50 L113.80,198.53 L114.60,197.54 L115.40,197.22 L116.20,196.39 L117.00,198.74 L117.80,197.33 L118.60,198.03 L119.40,197.87 L120.20,198.72 L121.00,198.95 L121.80,197.92 L122.60,197.47 L123.40,197.94 L124.20,199.19 L125.00,197.81 L125.80,198.57 L126.60,198.20 L127.40,197.96 L128.20,199.46 L129.00,198.26 L129.80,198.86 L130.60,197.42 L131.40,197.99 L132.20,199.52 L133.00,199.67 L133.80,198.15 L134.60,199.63 L135.40,199.93 L136.20,199.86 L137.00,200.03 L137.80,198.07 L138.60,199.61 L139.40,199.69 L140.20,200.15 L141.00,199.99 L141.80,199.80 L142.60,199.24 L143.40,199.05 L144.20,199.00 L145.00,198.52 L145.80,200.18 L146.60,199.42 L147.40,200.48 L148.20,199.91 L149.00,200.06 L149.80,200.33 L150.60,199.87 L151.40,200.28 L152.20,200.87 L153.00,200.17 L153.80,200.68 L154.60,199.01 L155.40,201.06 L156.20,200.15 L157.00,199.54 L157.80,201.13 L158.60,199.28 L159.40,200.63 L160.20,201.09 L161.00,201.28 L161.80,201.34 L162.60,200.94 L163.40,201.15 L164.20,199.78 L165.00,199.59 L165.80,200.88 L166.60,200.51 L167.40,201.29 L168.20,200.25 L169.00,199.78 L169.80,201.61 L170.60,201.14 L171.40,200.77 L172.20,201.74 L173.00,201.95 L173.80,200.72 L174.60,201.90 L175.40,200.98 L176.20,202.00 L177.00,200.25 L177.80,201.78 L178.60,202.23 L179.40,202.12 L180.20,201.79 L181.00,202.36 L181.80,201.09 L182.60,200.53 L183.40,202.12 L184.20,200.73 L185.00,202.33 L185.80,202.11 L186.60,200.82 L187.40,201.16 L188.20,202.34 L189.00,202.56 L189.80,202.76 L190.60,201.14 L191.40,202.79 L192.20,202.66 L193.00,201.62 L193.80,201.41 L194.60,201.72 L195.40,202.90 L196.20,202.56 L197.00,201.65 L197.80,202.48 L198.60,203.15 L199.40,201.30 L200.20,201.64 L201.00,201.45 L201.80,203.10 L202.60,203.08 L203.40,203.36 L204.20,203.06 L205.00,203.40 L205.80,202.47 L206.60,202.99 L207.40,203.19 L208.20,202.00 L209.00,202.39 L209.80,203.09 L210.60,203.05 L211.40,202.70 L212.20,203.29 L213.00,203.03 L213.80,202.40 L214.60,202.06 L215.40,202.14 L216.20,202.45 L217.00,203.42 L217.80,203.75 L218.60,203.89 L219.40,203.99 L220.20,202.58 L221.00,203.12 L221.80,203.57 L222.60,204.12 L223.40,202.90 L224.20,203.57 L225.00,204.16 L225.80,203.29 L226.60,203.59 L227.40,202.57 L228.20,203.16 L229.00,203.72 L229.80,203.08 L230.60,203.19 L231.40,203.08 L232.20,204.30 L233.00,204.49 L233.80,203.50 L234.60,204.49 L235.40,203.08 L236.20,204.56 L237.00,203.33 L237.80,204.28 L238.60,203.52 L239.40,203.79 L240.20,204.44 L241.00,203.90 L241.80,204.72 L242.60,204.84 L243.40,204.67 L244.20,203.99 L245.00,204.70 L245.80,203.47 L246.60,204.97 L247.40,204.06 L248.20,204.80 L249.00,204.58 L249.80,205.08 L250.60,204.94 L251.40,203.81 L252.20,205.14 L253.00,205.18 L253.80,204.06 L254.60,205.03 L255.40,204.22 L256.20,204.55 L257.00,205.06 L257.80,203.86 L258.60,204.21 L259.40,203.91 L260.20,204.52 L261.00,204.86 L261.80,204.94 L262.60,205.31 L263.40,205.41 L264.20,205.17 L265.00,204.54 L265.80,205.55 L266.60,204.29 L267.40,204.09 L268.20,205.58 L269.00,204.79 L269.80,205.64 L270.60,205.40 L271.40,205.48 L272.20,204.11 L273.00,205.78 L273.80,205.45 L274.60,204.44 L275.40,205.85 L276.20,205.88 L277.00,205.76 L277.80,205.69 L278.60,204.93 L279.40,205.93 L280.20,205.13 L281.00,204.56 L281.80,205.87 L282.60,205.65 L283.40,205.41 L284.20,205.75 L285.00,205.20 L285.80,204.98 L286.60,204.74 L287.40,205.18 L288.20,205.99 L289.00,205.91 L289.80,206.19 L290.60,204.61 L291.40,206.14 L292.20,205.90 L293.00,205.35 L293.80,206.26 L294.60,204.91 L295.40,205.93 L296.20,205.26 L297.00,205.57 L297.80,206.40 L298.60,205.63 L299.40,205.67 L300.20,206.38 L301.00,205.96 L301.80,206.44 L302.60,206.52 L303.40,205.98 L304.20,206.17 L305.00,206.22 L305.80,206.30 L306.60,206.66 L307.40,206.34 L308.20,205.19 L309.00,206.32 L309.80,205.54 L310.60,206.58 L311.40,205.55 L312.20,206.13 L313.00,205.52 L313.80,206.38 L314.60,206.61 L315.40,206.41 L316.20,205.42 L317.00,205.49 L317.80,206.10 L318.60,206.07 L319.40,206.78 L320.20,205.57 L321.00,206.22 L321.80,205.87 L322.60,206.40 L323.40,206.38 L324.20,206.50 L325.00,206.53 L325.80,207.10 L326.60,206.24 L327.40,205.61 L328.20,207.15 L329.00,206.86 L329.80,205.81 L330.60,206.89 L331.40,206.61 L332.20,206.80 L333.00,206.04 L333.80,206.69 L334.60,206.98 L335.40,206.49 L336.20,205.98 L337.00,207.34 L337.80,206.50 L338.60,206.59 L339.40,206.49 L340.20,206.34 L341.00,206.33 L341.80,206.24 L342.60,207.18 L343.40,206.65 L344.20,207.47 L345.00,206.10 L345.80,206.79 L346.60,207.11 L347.40,207.45 L348.20,207.49 L349.00,207.50 L349.80,206.59 L350.60,206.65 L351.40,206.83 L352.20,207.43 L353.00,207.65 L353.80,207.39 L354.60,207.14 L355.40,207.24 L356.20,207.36 L357.00,207.35 L357.80,207.07 L358.60,206.83 L359.40,206.25 L360.20,207.34 L361.00,207.06 L361.80,207.81 L362.60,206.67 L363.40,206.70 L364.20,206.63 L365.00,207.55 L365.80,207.74 L366.60,207.16 L367.40,207.71 L368.20,207.88 L369.00,207.25 L369.80,207.44 L370.60,207.84 L371.40,207.58 L372.20,206.45 L373.00,206.92 L373.80,207.44 L374.60,206.78 L375.40,206.98 L376.20,206.91 L377.00,207.93 L377.80,207.44 L378.60,206.76 L379.40,208.04 L380.20,207.33 L381.00,207.67 L381.80,207.98 L382.60,206.84 L383.40,207.10 L384.20,208.16 L385.00,207.34 L385.80,208.16 L386.60,207.71 L387.40,207.38 L388.20,208.23 L389.00,207.03 L389.80,208.22 L390.60,207.82 L391.40,207.54 L392.20,207.39 L393.00,208.11 L393.80,207.16 L394.60,208.07 L395.40,208.33 L396.20,207.87 L397.00,208.04 L397.80,208.34 L398.60,207.47 L399.40,207.32 L400.20,207.28 L401.00,207.12 L401.80,208.33 L402.60,208.42 L403.40,208.25 L404.20,207.38 L405.00,207.55 L405.80,207.41 L406.60,207.99 L407.40,207.30 L408.20,208.20 L409.00,208.55 L409.80,208.50 L410.60,208.30 L411.40,208.56 L412.20,208.04 L413.00,207.18 L413.80,208.43 L414.60,207.75 L415.40,207.98 L416.20,207.44 L417.00,208.14 L417.80,208.28 L418.60,208.59 L419.40,207.57 L420.20,207.55 L421.00,207.69 L421.80,208.29 L422.60,207.64 L423.40,207.35 L424.20,208.00 L425.00,208.34 L425.80,207.36 L426.60,207.70 L427.40,208.03 L428.20,208.21 L429.00,208.25 L429.80,208.57 L430.60,207.45 L431.40,208.26 L432.20,208.61 L433.00,208.82 L433.80,208.23 L434.60,208.42 L435.40,208.63 L436.20,208.55 L437.00,207.73 L437.80,208.69 L438.60,208.83 L439.40,208.91 L440.20,208.89 L441.00,208.86 L441.80,208.25 L442.60,208.04 L443.40,207.96 L444.20,207.80 L445.00,208.48 L445.80,208.00 L446.60,208.57 L447.40,208.67 L448.20,208.02 L449.00,208.93 L449.80,208.41 L450.60,207.94 L451.40,208.66 L452.20,208.46 L453.00,208.51 L453.80,208.27 L454.60,208.80 L455.40,209.07 L456.20,208.49 L457.00,208.71 L457.80,208.58 L458.60,207.75 L459.40,207.93 L460.20,207.95 L461.00,208.64 L461.80,208.46 L462.60,208.46 L463.40,208.95 L464.20,208.09 L465.00,208.71 L465.80,208.66 L466.60,209.17 L467.40,209.19 L468.20,208.55 L469.00,208.28 L469.80,209.16 L470.60,208.63 L471.40,209.26 L472.20,208.87 L473.00,208.01 L473.80,208.24 L474.60,208.81 L475.40,208.44 L476.20,208.84 L477.00,209.02 L477.80,208.74 L478.60,208.98 L479.40,209.06 L480.20,209.19 L481.00,209.28 L481.80,208.29 L482.60,208.35 L483.40,209.06 L484.20,208.89 L485.00,208.56 L485.80,209.09 L486.60,208.26 L487.40,209.23 L488.20,208.83 L489.00,209.33 L489.80,209.40 L490.60,209.22 L491.40,209.40 L492.20,208.24 L493.00,209.41 L493.80,208.72 L494.60,208.66 L495.40,208.79 L496.20,208.61 L497.00,209.42 L497.80,209.51 L498.60,208.44 L499.40,209.13 L500.20,208.46 L501.00,208.43 L501.80,209.50 L502.60,208.64 L503.40,208.65 L504.20,208.28 L505.00,208.68 L505.80,209.57 L506.60,208.33 L507.40,208.77 L508.20,208.26 L509.00,209.59 L509.80,209.37 L510.60,209.46 L511.40,208.36 L512.20,209.56 L513.00,209.07 L513.80,209.00 L514.60,209.60 L515.40,209.64 L516.20,209.25 L517.00,209.37 L517.80,208.30 L518.60,208.33 L519.40,209.29 L520.20,208.47 L521.00,208.97 L521.80,209.70 L522.60,209.60 L523.40,209.62 L524.20,209.47 L525.00,209.42 L525.80,209.57 L526.60,208.71 L527.40,209.27 L528.20,209.14 L529.00,209.35 L529.80,209.36 L530.60,208.70 L531.40,209.57 L532.20,209.51 L533.00,208.60 L533.80,209.21 L534.60,209.55 L535.40,208.69 L536.20,208.80 L537.00,209.59 L537.80,209.10 L538.60,209.82 L539.40,209.80 L540.20,209.47 L541.00,209.79 L541.80,209.80 L542.60,209.32 L543.40,209.71 L544.20,209.24 L545.00,209.47 L545.80,208.97 L546.60,209.84 L547.40,208.59 L548.20,208.95 L549.00,209.89 L549.80,209.08 L550.60,208.79 L551.40,209.82 L552.20,209.15 L553.00,209.05 L553.80,209.28 L554.60,209.88 L555.40,209.82 L556.20,209.89 L557.00,209.84 L557.80,209.63 L558.60,209.17 L559.40,209.69 L560.20,208.99 L561.00,209.20 L561.80,208.91 L562.60,209.95 L563.40,209.37 L564.20,209.55 L565.00,209.99 L565.80,209.57 L566.60,209.25 L567.40,209.83 L568.20,208.66 L569.00,208.91 L569.80,209.73 L570.60,208.79 L571.40,209.17 L572.20,209.48 L573.00,209.79 L573.80,209.88 L574.60,210.05 L575.40,209.47 L576.20,209.83 L577.00,208.83 L577.80,210.04 L578.60,209.78 L579.40,210.05 L580.20,209.90 L581.00,209.28 L581.80,209.45 L582.60,209.24 L583.40,209.11 L584.20,209.99 L585.00,208.90 L585.80,209.40 L586.60,210.10 L587.40,209.86 L588.20,209.70 L589.00,208.80 L589.80,209.88 L590.60,209.23 L591.40,209.61 L592.20,209.51 L593.00,209.34 L593.80,209.23 L594.60,209.65 L595.40,209.72 L596.20,208.83 L597.00,210.16 L597.80,209.61 L598.60,210.10 L599.40,210.09 L600.20,208.87 L601.00,209.22 L601.80,210.15 L602.60,209.85 L603.40,209.85 L604.20,210.06 L605.00,210.06 L605.80,209.99 L606.60,210.13 L607.40,209.34 L608.20,209.77 L609.00,209.60 L609.80,210.10 L610.60,209.15 L611.40,210.02 L612.20,210.24 L613.00,210.20 L613.80,209.98 L614.60,208.95 L615.40,209.49 L616.20,209.88 L617.00,210.02 L617.80,210.20 L618.60,210.19 L619.40,209.99 L620.20,210.14 L621.00,210.09 L621.80,210.27 L622.60,210.00 L623.40,209.75 L624.20,209.20 L625.00,209.93 L625.80,209.95 L626.60,209.67 L627.40,210.00 L628.20,209.28 L629.00,209.54 L629.80,210.08 L630.60,209.27 L631.40,210.17 L632.20,209.52 L633.00,209.59 L633.80,210.19 L634.60,209.90 L635.40,210.20 L636.20,209.84 L637.00,210.25 L637.80,209.35 L638.60,210.04 L639.40,210.28 L640.20,209.40 L641.00,210.03 L641.80,209.93 L642.60,209.62 L643.40,210.07 L644.20,210.26 L645.00,209.57 L645.80,209.37 L646.60,210.26 L647.40,210.09 L648.20,209.59 L649.00,209.42 L649.80,209.21 L650.60,210.10 L651.40,209.53 L652.20,209.27 L653.00,209.99 L653.80,209.98 L654.60,209.93 L655.40,210.08 L656.20,209.52 L657.00,210.40 L657.80,209.56 L658.60,209.63 L659.40,210.07 L660.20,209.35 L661.00,210.44 L661.80,210.21 L662.60,209.96 L663.40,209.38 L664.20,210.33 L665.00,210.03 L665.80,209.50 L666.60,210.44 L667.40,209.90 L668.20,210.25 L669.00,210.06 L669.80,210.45 L670.60,209.41 L671.40,209.30 L672.20,209.74 L673.00,209.46 L673.80,210.44 L674.60,210.13 L675.40,209.74 L676.20,210.48 L677.00,209.90 L677.80,209.34 L678.60,209.55 L679.40,210.19 L680.20,210.46 L681.00,209.77 L681.80,209.34 L682.60,210.30 L683.40,209.33 L684.20,209.90 L685.00,210.33 L685.80,209.35 L686.60,210.26 L687.40,210.27 L688.20,210.43 L689.00,209.98 L689.80,209.93 L690.60,210.49 L691.40,210.26 L692.20,210.45 L693.00,209.47 L693.80,209.46 L694.60,210.49 L695.40,210.07 L696.20,210.43 L697.00,210.09 L697.80,210.11 L698.60,210.41 L699.40,210.55 L700.20,209.46 L701.00,209.96 L701.80,210.41 L702.60,209.93 L703.40,209.61 L704.20,209.37 L705.00,210.42 L705.80,210.31 L706.60,210.33 L707.40,210.15 L708.20,209.73 L709.00,209.56 L709.80,210.32 L710.60,209.75 L711.40,209.46 L712.20,210.00 L713.00,209.53 L713.80,209.39 L714.60,210.44 L715.40,210.20 L716.20,209.86 L717.00,209.68 L717.80,210.27 L718.60,210.35 L719.40,210.61 L720.20,209.66 L721.00,210.36 L721.80,209.98 L722.60,209.85 L723.40,210.57 L724.20,210.52 L725.00,210.49 L725.80,210.31 L726.60,209.34 L727.40,210.13 L728.20,210.24 L729.00,210.60 L729.80,210.34 L730.60,210.62 L731.40,210.36 L732.20,210.15 L733.00,210.36 L733.80,209.91 L734.60,209.55 L735.40,210.41 L736.20,210.58 L737.00,210.34 L737.80,209.79 L738.60,209.40 L739.40,210.36 L740.20,210.47 L741.00,209.74 L741.80,209.59 L742.60,210.44 L743.40,209.43 L744.20,209.48 L745.00,210.63 L745.00,213.10 L744.20,213.04 L743.40,214.16 L742.60,212.95 L741.80,213.02 L741.00,213.20 L740.20,213.02 L739.40,214.17 L738.60,213.62 L737.80,213.15 L737.00,213.79 L736.20,213.53 L735.40,213.01 L734.60,213.76 L733.80,213.49 L733.00,214.21 L732.20,213.68 L731.40,213.66 L730.60,213.60 L729.80,214.13 L729.00,213.50 L728.20,213.92 L727.40,212.97 L726.60,213.08 L725.80,213.43 L725.00,214.07 L724.20,213.16 L723.40,213.72 L722.60,213.36 L721.80,213.19 L721.00,213.11 L720.20,213.34 L719.40,213.43 L718.60,213.59 L717.80,213.02 L717.00,213.73 L716.20,213.78 L715.40,213.15 L714.60,214.01 L713.80,213.05 L713.00,213.22 L712.20,213.38 L711.40,213.85 L710.60,213.07 L709.80,213.10 L709.00,213.93 L708.20,213.68 L707.40,213.48 L706.60,214.29 L705.80,213.09 L705.00,213.85 L704.20,213.37 L703.40,213.44 L702.60,213.79 L701.80,213.64 L701.00,213.95 L700.20,213.07 L699.40,213.36 L698.60,213.90 L697.80,213.97 L697.00,214.15 L696.20,213.11 L695.40,213.34 L694.60,213.48 L693.80,213.11 L693.00,213.50 L692.20,214.27 L691.40,213.37 L690.60,213.75 L689.80,213.48 L689.00,213.11 L688.20,214.00 L687.40,213.47 L686.60,214.29 L685.80,213.09 L685.00,214.20 L684.20,213.61 L683.40,213.12 L682.60,213.36 L681.80,214.41 L681.00,213.15 L680.20,213.52 L679.40,213.78 L678.60,214.39 L677.80,213.35 L677.00,213.35 L676.20,214.12 L675.40,213.19 L674.60,213.82 L673.80,213.16 L673.00,213.19 L672.20,213.86 L671.40,213.68 L670.60,213.15 L669.80,213.51 L669.00,214.33 L668.20,213.93 L667.40,213.38 L666.60,213.38 L665.80,213.26 L665.00,213.60 L664.20,213.17 L663.40,214.11 L662.60,213.52 L661.80,213.33 L661.00,214.47 L660.20,213.24 L659.40,213.76 L658.60,213.62 L657.80,213.74 L657.00,214.16 L656.20,214.08 L655.40,213.19 L654.60,214.18 L653.80,214.30 L653.00,213.61 L652.20,214.07 L651.40,213.51 L650.60,213.92 L649.80,213.31 L649.00,213.48 L648.20,213.42 L647.40,213.22 L646.60,213.58 L645.80,213.25 L645.00,213.41 L644.20,213.80 L643.40,213.49 L642.60,213.53 L641.80,214.18 L641.00,214.56 L640.20,213.74 L639.40,213.41 L638.60,214.26 L637.80,214.38 L637.00,214.25 L636.20,213.77 L635.40,213.33 L634.60,214.08 L633.80,213.91 L633.00,213.51 L632.20,213.60 L631.40,213.94 L630.60,213.77 L629.80,214.56 L629.00,213.53 L628.20,214.22 L627.40,213.45 L626.60,214.49 L625.80,213.37 L625.00,214.59 L624.20,214.12 L623.40,213.85 L622.60,213.31 L621.80,213.80 L621.00,213.42 L620.20,214.60 L619.40,213.80 L618.60,214.18 L617.80,213.71 L617.00,214.44 L616.20,213.39 L615.40,213.35 L614.60,213.36 L613.80,214.53 L613.00,213.45 L612.20,214.53 L611.40,213.37 L610.60,213.47 L609.80,214.49 L609.00,213.78 L608.20,214.51 L607.40,214.39 L606.60,214.46 L605.80,214.72 L605.00,213.52 L604.20,213.57 L603.40,214.59 L602.60,214.49 L601.80,214.25 L601.00,213.83 L600.20,213.89 L599.40,213.43 L598.60,213.52 L597.80,213.53 L597.00,213.50 L596.20,213.58 L595.40,214.16 L594.60,214.68 L593.80,214.75 L593.00,214.35 L592.20,213.71 L591.40,214.07 L590.60,213.50 L589.80,213.51 L589.00,213.49 L588.20,213.48 L587.40,213.95 L586.60,213.85 L585.80,213.84 L585.00,213.63 L584.20,214.03 L583.40,214.61 L582.60,214.79 L581.80,214.60 L581.00,213.65 L580.20,213.52 L579.40,213.98 L578.60,214.45 L577.80,213.63 L577.00,213.81 L576.20,213.77 L575.40,213.77 L574.60,214.66 L573.80,213.71 L573.00,214.90 L572.20,213.92 L571.40,214.06 L570.60,214.34 L569.80,213.78 L569.00,214.51 L568.20,213.59 L567.40,214.18 L566.60,213.79 L565.80,214.94 L565.00,214.21 L564.20,214.21 L563.40,213.63 L562.60,213.88 L561.80,213.96 L561.00,213.97 L560.20,213.64 L559.40,213.72 L558.60,214.64 L557.80,213.72 L557.00,214.22 L556.20,213.66 L555.40,214.07 L554.60,214.89 L553.80,213.72 L553.00,214.95 L552.20,214.71 L551.40,214.57 L550.60,214.27 L549.80,214.08 L549.00,214.33 L548.20,213.73 L547.40,214.30 L546.60,214.76 L545.80,213.78 L545.00,214.84 L544.20,213.77 L543.40,214.34 L542.60,213.92 L541.80,214.86 L541.00,213.86 L540.20,214.29 L539.40,214.51 L538.60,213.89 L537.80,214.00 L537.00,214.38 L536.20,213.81 L535.40,215.13 L534.60,214.23 L533.80,214.09 L533.00,213.90 L532.20,214.22 L531.40,214.57 L530.60,214.93 L529.80,213.95 L529.00,215.17 L528.20,213.88 L527.40,214.34 L526.60,214.68 L525.80,213.87 L525.00,214.44 L524.20,213.98 L523.40,214.85 L522.60,214.60 L521.80,214.84 L521.00,214.07 L520.20,214.63 L519.40,214.03 L518.60,214.51 L517.80,214.83 L517.00,214.02 L516.20,213.99 L515.40,214.15 L514.60,214.16 L513.80,214.39 L513.00,214.89 L512.20,214.56 L511.40,214.26 L510.60,214.14 L509.80,214.06 L509.00,214.29 L508.20,214.71 L507.40,215.02 L506.60,214.07 L505.80,214.84 L505.00,215.09 L504.20,214.42 L503.40,215.10 L502.60,214.08 L501.80,215.04 L501.00,214.72 L500.20,215.03 L499.40,214.87 L498.60,214.68 L497.80,214.33 L497.00,214.21 L496.20,214.95 L495.40,214.21 L494.60,214.29 L493.80,214.41 L493.00,214.33 L492.20,215.10 L491.40,215.00 L490.60,214.17 L489.80,214.75 L489.00,215.27 L488.20,214.41 L487.40,215.14 L486.60,214.24 L485.80,214.36 L485.00,214.39 L484.20,214.36 L483.40,215.54 L482.60,214.31 L481.80,214.29 L481.00,215.08 L480.20,214.25 L479.40,214.42 L478.60,214.28 L477.80,214.32 L477.00,214.39 L476.20,215.29 L475.40,214.43 L474.60,215.62 L473.80,214.54 L473.00,215.44 L472.20,215.02 L471.40,215.53 L470.60,214.63 L469.80,214.54 L469.00,214.61 L468.20,215.40 L467.40,214.47 L466.60,214.46 L465.80,215.81 L465.00,214.98 L464.20,215.04 L463.40,215.23 L462.60,214.43 L461.80,215.10 L461.00,214.95 L460.20,214.83 L459.40,215.27 L458.60,215.54 L457.80,215.53 L457.00,215.19 L456.20,215.67 L455.40,214.82 L454.60,215.83 L453.80,214.86 L453.00,215.96 L452.20,215.03 L451.40,215.79 L450.60,215.65 L449.80,214.59 L449.00,214.80 L448.20,215.71 L447.40,215.18 L446.60,215.04 L445.80,215.78 L445.00,215.98 L444.20,214.61 L443.40,215.49 L442.60,215.57 L441.80,215.78 L441.00,214.93 L440.20,214.81 L439.40,215.02 L438.60,214.70 L437.80,216.12 L437.00,214.87 L436.20,215.36 L435.40,214.89 L434.60,215.32 L433.80,215.50 L433.00,215.34 L432.20,215.13 L431.40,214.85 L430.60,215.31 L429.80,215.55 L429.00,215.21 L428.20,216.11 L427.40,215.01 L426.60,216.05 L425.80,215.84 L425.00,215.37 L424.20,215.18 L423.40,216.20 L422.60,216.03 L421.80,216.32 L421.00,215.19 L420.20,215.47 L419.40,216.26 L418.60,215.57 L417.80,215.01 L417.00,215.47 L416.20,215.86 L415.40,215.53 L414.60,215.11 L413.80,216.09 L413.00,215.16 L412.20,215.59 L411.40,216.24 L410.60,215.93 L409.80,215.95 L409.00,215.61 L408.20,215.16 L407.40,215.28 L406.60,215.09 L405.80,215.39 L405.00,215.50 L404.20,215.79 L403.40,215.27 L402.60,215.18 L401.80,216.17 L401.00,215.32 L400.20,215.75 L399.40,215.49 L398.60,215.44 L397.80,215.45 L397.00,216.71 L396.20,215.47 L395.40,216.53 L394.60,216.56 L393.80,215.56 L393.00,215.68 L392.20,215.92 L391.40,215.39 L390.60,215.62 L389.80,216.69 L389.00,216.62 L388.20,216.72 L387.40,215.37 L386.60,215.49 L385.80,215.67 L385.00,215.65 L384.20,215.50 L383.40,216.35 L382.60,216.76 L381.80,215.47 L381.00,215.57 L380.20,216.92 L379.40,216.94 L378.60,215.53 L377.80,216.77 L377.00,215.65 L376.20,217.00 L375.40,215.99 L374.60,216.10 L373.80,215.59 L373.00,215.69 L372.20,215.97 L371.40,216.20 L370.60,216.55 L369.80,216.35 L369.00,216.98 L368.20,216.81 L367.40,216.71 L366.60,216.58 L365.80,216.73 L365.00,215.77 L364.20,216.88 L363.40,217.02 L362.60,217.08 L361.80,216.00 L361.00,217.13 L360.20,217.13 L359.40,217.02 L358.60,217.03 L357.80,216.11 L357.00,216.97 L356.20,216.71 L355.40,216.78 L354.60,215.95 L353.80,216.92 L353.00,216.78 L352.20,217.46 L351.40,216.93 L350.60,217.25 L349.80,216.14 L349.00,216.03 L348.20,217.55 L347.40,216.06 L346.60,216.12 L345.80,217.53 L345.00,216.58 L344.20,216.18 L343.40,217.57 L342.60,216.59 L341.80,217.28 L341.00,217.58 L340.20,216.25 L339.40,216.37 L338.60,217.03 L337.80,217.37 L337.00,216.40 L336.20,216.93 L335.40,217.41 L334.60,216.60 L333.80,217.88 L333.00,216.76 L332.20,217.03 L331.40,217.47 L330.60,217.69 L329.80,216.42 L329.00,218.00 L328.20,217.22 L327.40,216.50 L326.60,217.73 L325.80,217.75 L325.00,217.09 L324.20,216.55 L323.40,216.77 L322.60,217.61 L321.80,217.84 L321.00,217.73 L320.20,217.77 L319.40,217.76 L318.60,216.86 L317.80,216.68 L317.00,217.83 L316.20,218.01 L315.40,217.56 L314.60,216.95 L313.80,216.90 L313.00,217.01 L312.20,216.87 L311.40,218.04 L310.60,218.41 L309.80,217.69 L309.00,217.04 L308.20,217.53 L307.40,217.14 L306.60,217.38 L305.80,216.97 L305.00,218.08 L304.20,218.53 L303.40,217.86 L302.60,217.76 L301.80,218.21 L301.00,218.68 L300.20,217.98 L299.40,217.55 L298.60,217.34 L297.80,217.61 L297.00,217.68 L296.20,218.18 L295.40,217.39 L294.60,217.71 L293.80,218.04 L293.00,217.87 L292.20,217.30 L291.40,218.18 L290.60,218.54 L289.80,218.96 L289.00,217.51 L288.20,217.71 L287.40,218.74 L286.60,217.64 L285.80,218.21 L285.00,218.58 L284.20,217.82 L283.40,218.65 L282.60,218.97 L281.80,217.80 L281.00,217.63 L280.20,217.98 L279.40,218.84 L278.60,218.26 L277.80,219.27 L277.00,218.30 L276.20,218.32 L275.40,217.90 L274.60,217.82 L273.80,218.82 L273.00,218.28 L272.20,218.46 L271.40,218.92 L270.60,218.37 L269.80,217.96 L269.00,219.24 L268.20,217.96 L267.40,219.59 L266.60,219.48 L265.80,218.82 L265.00,218.94 L264.20,218.17 L263.40,218.10 L262.60,218.99 L261.80,219.24 L261.00,219.53 L260.20,219.22 L259.40,218.55 L258.60,219.88 L257.80,218.27 L257.00,219.21 L256.20,218.83 L255.40,219.73 L254.60,218.38 L253.80,218.94 L253.00,219.81 L252.20,219.95 L251.40,218.60 L250.60,219.35 L249.80,219.26 L249.00,218.76 L248.20,220.13 L247.40,219.14 L246.60,219.57 L245.80,219.91 L245.00,218.78 L244.20,219.30 L243.40,219.55 L242.60,219.15 L241.80,218.99 L241.00,219.34 L240.20,218.84 L239.40,220.66 L238.60,218.92 L237.80,220.16 L237.00,219.20 L236.20,220.81 L235.40,219.77 L234.60,219.75 L233.80,220.64 L233.00,219.24 L232.20,219.37 L231.40,219.25 L230.60,219.30 L229.80,220.89 L229.00,220.99 L228.20,220.64 L227.40,219.39 L226.60,219.35 L225.80,219.40 L225.00,219.94 L224.20,219.48 L223.40,220.75 L222.60,220.39 L221.80,220.52 L221.00,219.86 L220.20,219.64 L219.40,220.40 L218.60,219.86 L217.80,220.14 L217.00,221.18 L216.20,219.84 L215.40,220.21 L214.60,221.63 L213.80,221.64 L213.00,221.56 L212.20,220.57 L211.40,221.58 L210.60,220.07 L209.80,221.41 L209.00,220.18 L208.20,221.97 L207.40,220.90 L206.60,220.40 L205.80,220.19 L205.00,220.23 L204.20,220.38 L203.40,220.60 L202.60,221.18 L201.80,220.74 L201.00,220.40 L200.20,220.96 L199.40,221.28 L198.60,220.75 L197.80,221.94 L197.00,221.56 L196.20,222.51 L195.40,222.23 L194.60,220.79 L193.80,220.96 L193.00,222.24 L192.20,221.26 L191.40,221.46 L190.60,222.76 L189.80,221.65 L189.00,222.18 L188.20,221.34 L187.40,222.31 L186.60,221.13 L185.80,221.26 L185.00,221.71 L184.20,222.11 L183.40,221.41 L182.60,222.14 L181.80,222.93 L181.00,221.26 L180.20,222.77 L179.40,221.76 L178.60,222.01 L177.80,222.92 L177.00,221.51 L176.20,221.46 L175.40,221.98 L174.60,223.42 L173.80,223.65 L173.00,222.13 L172.20,223.66 L171.40,223.63 L170.60,221.90 L169.80,223.16 L169.00,222.18 L168.20,223.19 L167.40,222.47 L166.60,223.81 L165.80,223.15 L165.00,223.27 L164.20,222.75 L163.40,222.76 L162.60,222.37 L161.80,222.22 L161.00,222.50 L160.20,224.16 L159.40,223.19 L158.60,223.67 L157.80,222.53 L157.00,224.14 L156.20,222.48 L155.40,223.82 L154.60,224.26 L153.80,222.88 L153.00,223.74 L152.20,223.02 L151.40,223.57 L150.60,224.62 L149.80,222.89 L149.00,222.99 L148.20,223.15 L147.40,223.11 L146.60,223.38 L145.80,224.46 L145.00,223.20 L144.20,224.30 L143.40,223.22 L142.60,225.19 L141.80,225.37 L141.00,223.64 L140.20,225.09 L139.40,224.06 L138.60,224.03 L137.80,224.88 L137.00,225.04 L136.20,224.08 L135.40,224.45 L134.60,225.65 L133.80,224.59 L133.00,224.68 L132.20,225.96 L131.40,226.09 L130.60,226.04 L129.80,224.10 L129.00,224.42 L128.20,224.43 L127.40,224.55 L126.60,224.26 L125.80,225.57 L125.00,226.55 L124.20,224.68 L123.40,224.45 L122.60,225.98 L121.80,225.83 L121.00,226.36 L120.20,224.64 L119.40,226.66 L118.60,226.53 L117.80,226.51 L117.00,226.64 L116.20,225.02 L115.40,226.90 L114.60,225.91 L113.80,225.06 L113.00,225.43 L112.20,226.01 L111.40,225.72 L110.60,226.24 L109.80,226.04 L109.00,225.67 L108.20,227.30 L107.40,227.04 L106.60,226.04 L105.80,227.45 L105.00,226.54 L104.20,226.41 L103.40,226.58 L102.60,225.84 L101.80,226.07 L101.00,226.36 L100.20,226.17 L99.40,226.18 L98.60,226.61 L97.80,228.15 L97.00,228.51 L96.20,226.33 L95.40,228.57 L94.60,228.61 L93.80,228.21 L93.00,228.96 L92.20,227.53 L91.40,227.40 L90.60,227.18 L89.80,227.51 L89.00,227.71 L88.20,229.34 L87.40,228.52 L86.60,228.44 L85.80,227.85 L85.00,229.52 L84.20,229.34 L83.40,228.30 L82.60,228.28 L81.80,229.14 L81.00,227.86 L80.20,230.16 L79.40,230.57 L78.60,232.49 L77.80,231.78 L77.00,235.19 L76.20,234.85 L75.40,235.61 L74.60,235.31 L73.80,237.02 L73.00,236.26 L72.20,235.96 L71.40,236.85 L70.60,235.05 L69.80,237.30 L69.00,236.76 L68.20,235.76 L67.40,236.30 L66.60,235.76 L65.80,235.14 L65.00,235.47 L64.20,235.68 L63.40,235.28 L62.60,235.87 L61.80,236.78 L61.00,235.17 L60.20,236.66 L59.40,236.41 L58.60,234.91 L57.80,237.31 L57.00,235.25 L56.20,235.78 L55.40,235.01 L54.60,235.05 L53.80,235.47 L53.00,234.93 L52.20,234.95 L51.40,235.56 L50.60,236.69 L49.80,236.16 L49.00,236.01 L48.20,235.25 L47.40,235.19 L46.60,237.06 L45.80,236.99 L45.00,235.68 L44.20,235.22 L43.40,235.00 L42.60,236.32 L41.80,237.47 L41.00,236.31 L40.20,235.70 L39.40,235.36 L38.60,236.32 L37.80,236.61 L37.00,235.30 L36.20,236.03 L35.40,235.33 L34.60,235.63 L33.80,234.94 L33.00,236.05 L32.20,235.01 L31.40,234.93 L30.60,237.30 L29.80,236.85 L29.00,235.64 L28.20,235.47 L27.40,235.05 Z" fill="#a44c80"/><path d="M27.40,190.36 L28.20,188.94 L29.00,188.97 L29.80,189.10 L30.60,190.19 L31.40,190.86 L32.20,189.54 L33.00,190.33 L33.80,188.94 L34.60,189.55 L35.40,190.71 L36.20,190.06 L37.00,191.15 L37.80,189.16 L38.60,190.63 L39.40,190.47 L40.20,190.82 L41.00,188.95 L41.80,190.77 L42.60,188.85 L43.40,188.94 L44.20,189.74 L45.00,190.12 L45.80,189.47 L46.60,191.10 L47.40,189.36 L48.20,188.81 L49.00,191.09 L49.80,190.42 L50.60,190.90 L51.40,189.05 L52.20,189.30 L53.00,188.80 L53.80,188.86 L54.60,189.41 L55.40,190.84 L56.20,189.01 L57.00,190.79 L57.80,190.07 L58.60,190.07 L59.40,189.43 L60.20,190.08 L61.00,190.75 L61.80,190.76 L62.60,189.65 L63.40,189.42 L64.20,191.05 L65.00,189.33 L65.80,190.30 L66.60,190.37 L67.40,190.98 L68.20,189.23 L69.00,191.13 L69.80,190.54 L70.60,190.97 L71.40,191.15 L72.20,189.11 L73.00,190.06 L73.80,190.78 L74.60,189.38 L75.40,189.11 L76.20,191.05 L77.00,192.00 L77.80,192.99 L78.60,193.48 L79.40,194.99 L80.20,195.60 L81.00,198.07 L81.80,198.47 L82.60,197.58 L83.40,197.55 L84.20,198.72 L85.00,198.54 L85.80,196.77 L86.60,198.52 L87.40,198.29 L88.20,197.31 L89.00,199.18 L89.80,198.12 L90.60,198.67 L91.40,197.08 L92.20,197.25 L93.00,197.40 L93.80,197.85 L94.60,199.18 L95.40,198.66 L96.20,198.99 L97.00,198.92 L97.80,197.67 L98.60,198.84 L99.40,198.84 L100.20,197.81 L101.00,199.48 L101.80,198.60 L102.60,199.53 L103.40,200.04 L104.20,199.10 L105.00,199.59 L105.80,199.68 L106.60,198.27 L107.40,198.78 L108.20,200.21 L109.00,198.97 L109.80,198.96 L110.60,198.97 L111.40,198.48 L112.20,198.98 L113.00,198.79 L113.80,199.31 L114.60,200.35 L115.40,199.61 L116.20,200.39 L117.00,200.81 L117.80,199.21 L118.60,200.72 L119.40,200.50 L120.20,199.36 L121.00,200.33 L121.80,200.23 L122.60,200.31 L123.40,200.86 L124.20,200.89 L125.00,200.44 L125.80,201.07 L126.60,199.79 L127.40,200.74 L128.20,201.01 L129.00,200.73 L129.80,201.57 L130.60,199.77 L131.40,200.73 L132.20,200.27 L133.00,201.88 L133.80,201.79 L134.60,200.99 L135.40,200.96 L136.20,200.73 L137.00,201.86 L137.80,202.04 L138.60,202.28 L139.40,200.83 L140.20,200.90 L141.00,201.41 L141.80,202.22 L142.60,202.38 L143.40,201.99 L144.20,201.12 L145.00,201.55 L145.80,202.62 L146.60,201.81 L147.40,201.14 L148.20,202.60 L149.00,201.20 L149.80,201.34 L150.60,202.41 L151.40,201.70 L152.20,202.93 L153.00,202.76 L153.80,201.87 L154.60,202.86 L155.40,202.95 L156.20,201.98 L157.00,203.18 L157.80,202.33 L158.60,202.61 L159.40,201.45 L160.20,202.69 L161.00,202.71 L161.80,202.53 L162.60,202.72 L163.40,203.46 L164.20,202.08 L165.00,202.27 L165.80,202.53 L166.60,202.19 L167.40,203.11 L168.20,202.81 L169.00,203.46 L169.80,202.48 L170.60,202.38 L171.40,202.27 L172.20,202.30 L173.00,203.79 L173.80,203.89 L174.60,203.57 L175.40,202.90 L176.20,202.76 L177.00,204.10 L177.80,203.86 L178.60,203.04 L179.40,204.08 L180.20,203.86 L181.00,204.19 L181.80,203.13 L182.60,203.02 L183.40,202.57 L184.20,204.37 L185.00,204.43 L185.80,203.48 L186.60,204.21 L187.40,203.88 L188.20,204.24 L189.00,203.28 L189.80,203.46 L190.60,203.38 L191.40,204.24 L192.20,204.11 L193.00,204.22 L193.80,204.07 L194.60,203.52 L195.40,204.16 L196.20,204.07 L197.00,204.98 L197.80,204.74 L198.60,203.46 L199.40,204.97 L200.20,203.78 L201.00,204.42 L201.80,203.63 L202.60,204.59 L203.40,204.67 L204.20,204.91 L205.00,204.22 L205.80,203.83 L206.60,204.13 L207.40,204.25 L208.20,204.29 L209.00,203.68 L209.80,204.43 L210.60,203.76 L211.40,203.92 L212.20,204.06 L213.00,204.02 L213.80,204.21 L214.60,204.75 L215.40,205.52 L216.20,205.34 L217.00,205.45 L217.80,204.93 L218.60,205.32 L219.40,205.41 L220.20,205.16 L221.00,204.87 L221.80,204.95 L222.60,205.05 L223.40,205.03 L224.20,204.48 L225.00,205.18 L225.80,205.59 L226.60,205.22 L227.40,205.86 L228.20,204.74 L229.00,206.02 L229.80,204.58 L230.60,206.04 L231.40,205.38 L232.20,205.42 L233.00,204.85 L233.80,204.90 L234.60,205.72 L235.40,205.65 L236.20,205.76 L237.00,206.41 L237.80,205.50 L238.60,206.17 L239.40,205.80 L240.20,204.89 L241.00,205.72 L241.80,205.99 L242.60,205.09 L243.40,205.93 L244.20,205.19 L245.00,205.15 L245.80,205.69 L246.60,205.99 L247.40,206.64 L248.20,205.17 L249.00,205.22 L249.80,206.72 L250.60,206.02 L251.40,205.71 L252.20,206.53 L253.00,206.49 L253.80,205.65 L254.60,205.86 L255.40,206.50 L256.20,206.65 L257.00,206.97 L257.80,205.83 L258.60,206.65 L259.40,205.84 L260.20,206.57 L261.00,206.64 L261.80,206.46 L262.60,205.68 L263.40,205.75 L264.20,205.64 L265.00,206.76 L265.80,206.24 L266.60,205.77 L267.40,205.87 L268.20,207.09 L269.00,206.76 L269.80,206.99 L270.60,205.82 L271.40,206.40 L272.20,207.20 L273.00,206.56 L273.80,206.74 L274.60,207.22 L275.40,207.14 L276.20,206.73 L277.00,206.52 L277.80,206.44 L278.60,206.19 L279.40,207.15 L280.20,206.69 L281.00,207.49 L281.80,207.53 L282.60,206.49 L283.40,207.34 L284.20,206.41 L285.00,206.45 L285.80,206.41 L286.60,206.53 L287.40,206.49 L288.20,207.09 L289.00,207.83 L289.80,206.47 L290.60,207.48 L291.40,206.52 L292.20,207.00 L293.00,207.38 L293.80,207.05 L294.60,207.33 L295.40,207.58 L296.20,207.80 L297.00,206.98 L297.80,207.73 L298.60,207.19 L299.40,207.60 L300.20,207.78 L301.00,206.66 L301.80,208.07 L302.60,207.47 L303.40,207.93 L304.20,207.00 L305.00,206.88 L305.80,207.13 L306.60,207.38 L307.40,207.09 L308.20,207.11 L309.00,206.99 L309.80,207.53 L310.60,207.37 L311.40,207.56 L312.20,208.14 L313.00,207.45 L313.80,206.90 L314.60,207.38 L315.40,207.94 L316.20,207.04 L317.00,207.19 L317.80,207.01 L318.60,207.16 L319.40,207.55 L320.20,207.30 L321.00,208.07 L321.80,207.38 L322.60,207.76 L323.40,207.47 L324.20,207.83 L325.00,207.96 L325.80,207.87 L326.60,207.75 L327.40,208.15 L328.20,208.24 L329.00,208.00 L329.80,208.32 L330.60,207.81 L331.40,207.60 L332.20,208.53 L333.00,208.07 L333.80,208.31 L334.60,207.79 L335.40,207.43 L336.20,207.46 L337.00,208.76 L337.80,208.76 L338.60,208.46 L339.40,208.43 L340.20,207.73 L341.00,208.45 L341.80,208.32 L342.60,207.98 L343.40,207.61 L344.20,208.73 L345.00,207.58 L345.80,208.90 L346.60,208.53 L347.40,207.61 L348.20,207.75 L349.00,208.69 L349.80,207.72 L350.60,208.73 L351.40,208.35 L352.20,208.74 L353.00,208.90 L353.80,207.97 L354.60,208.27 L355.40,207.96 L356.20,208.68 L357.00,209.03 L357.80,207.88 L358.60,208.29 L359.40,208.69 L360.20,208.38 L361.00,209.02 L361.80,208.48 L362.60,207.94 L363.40,208.72 L364.20,208.90 L365.00,208.72 L365.80,209.12 L366.60,208.62 L367.40,209.10 L368.20,209.09 L369.00,209.16 L369.80,208.28 L370.60,208.54 L371.40,208.25 L372.20,208.20 L373.00,208.91 L373.80,208.12 L374.60,208.89 L375.40,209.22 L376.20,208.47 L377.00,208.25 L377.80,208.79 L378.60,209.00 L379.40,208.53 L380.20,209.13 L381.00,209.28 L381.80,208.57 L382.60,209.30 L383.40,209.14 L384.20,209.31 L385.00,209.09 L385.80,208.63 L386.60,208.61 L387.40,209.30 L388.20,208.61 L389.00,208.51 L389.80,209.37 L390.60,209.37 L391.40,208.66 L392.20,208.57 L393.00,208.59 L393.80,208.62 L394.60,208.56 L395.40,209.35 L396.20,208.78 L397.00,209.43 L397.80,209.44 L398.60,209.45 L399.40,208.66 L400.20,208.74 L401.00,209.29 L401.80,209.47 L402.60,209.36 L403.40,209.38 L404.20,208.82 L405.00,209.50 L405.80,209.51 L406.60,209.52 L407.40,208.84 L408.20,209.11 L409.00,209.22 L409.80,209.54 L410.60,209.15 L411.40,209.56 L412.20,209.39 L413.00,208.91 L413.80,208.71 L414.60,208.70 L415.40,209.59 L416.20,208.76 L417.00,209.10 L417.80,209.53 L418.60,209.62 L419.40,209.28 L420.20,209.30 L421.00,209.09 L421.80,209.64 L422.60,208.86 L423.40,209.13 L424.20,209.53 L425.00,208.84 L425.80,209.67 L426.60,209.68 L427.40,209.69 L428.20,209.69 L429.00,209.70 L429.80,209.04 L430.60,209.25 L431.40,209.06 L432.20,209.29 L433.00,209.73 L433.80,209.20 L434.60,209.74 L435.40,209.24 L436.20,208.97 L437.00,209.71 L437.80,209.37 L438.60,209.77 L439.40,209.58 L440.20,209.78 L441.00,209.48 L441.80,209.79 L442.60,209.80 L443.40,209.80 L444.20,209.81 L445.00,209.82 L445.80,209.82 L446.60,209.83 L447.40,209.60 L448.20,209.76 L449.00,209.29 L449.80,209.85 L450.60,209.85 L451.40,209.14 L452.20,209.86 L453.00,209.83 L453.80,209.63 L454.60,209.88 L455.40,209.70 L456.20,209.89 L457.00,209.90 L457.80,209.42 L458.60,209.88 L459.40,209.91 L460.20,209.43 L461.00,209.48 L461.80,209.70 L462.60,209.79 L463.40,209.26 L464.20,209.94 L465.00,209.62 L465.80,209.95 L466.60,209.96 L467.40,209.96 L468.20,209.38 L469.00,209.97 L469.80,209.45 L470.60,209.92 L471.40,209.99 L472.20,209.67 L473.00,209.76 L473.80,210.00 L474.60,209.68 L475.40,209.78 L476.20,209.70 L477.00,210.02 L477.80,210.03 L478.60,209.56 L479.40,209.66 L480.20,210.04 L481.00,209.54 L481.80,210.01 L482.60,209.90 L483.40,209.72 L484.20,210.04 L485.00,210.07 L485.80,210.07 L486.60,210.08 L487.40,209.98 L488.20,210.00 L489.00,209.91 L489.80,209.97 L490.60,209.92 L491.40,209.88 L492.20,210.11 L493.00,209.57 L493.80,210.07 L494.60,210.12 L495.40,209.70 L496.20,209.61 L497.00,209.96 L497.80,210.14 L498.60,210.14 L499.40,210.04 L500.20,209.96 L501.00,209.66 L501.80,209.88 L502.60,210.16 L503.40,209.98 L504.20,210.17 L505.00,210.17 L505.80,210.18 L506.60,210.18 L507.40,209.99 L508.20,210.19 L509.00,210.19 L509.80,210.20 L510.60,210.20 L511.40,210.07 L512.20,210.12 L513.00,209.91 L513.80,210.22 L514.60,210.17 L515.40,209.97 L516.20,210.14 L517.00,209.82 L517.80,209.84 L518.60,209.88 L519.40,210.24 L520.20,210.25 L521.00,210.07 L521.80,210.26 L522.60,210.26 L523.40,210.26 L524.20,210.27 L525.00,210.26 L525.80,210.27 L526.60,210.28 L527.40,210.00 L528.20,210.28 L529.00,209.93 L529.80,210.29 L530.60,210.30 L531.40,210.30 L532.20,210.30 L533.00,210.22 L533.80,210.10 L534.60,210.31 L535.40,210.32 L536.20,210.32 L537.00,210.32 L537.80,210.31 L538.60,210.33 L539.40,210.33 L540.20,210.34 L541.00,210.34 L541.80,210.23 L542.60,210.35 L543.40,210.06 L544.20,210.35 L545.00,210.36 L545.80,210.36 L546.60,210.36 L547.40,210.37 L548.20,210.25 L549.00,210.22 L549.80,210.38 L550.60,210.38 L551.40,210.38 L552.20,210.13 L553.00,210.39 L553.80,210.39 L554.60,210.39 L555.40,210.40 L556.20,210.13 L557.00,210.37 L557.80,210.41 L558.60,210.41 L559.40,210.41 L560.20,210.25 L561.00,210.42 L561.80,210.42 L562.60,210.31 L563.40,210.25 L564.20,210.43 L565.00,210.43 L565.80,210.11 L566.60,210.40 L567.40,210.44 L568.20,210.44 L569.00,210.45 L569.80,210.45 L570.60,210.45 L571.40,210.46 L572.20,210.17 L573.00,210.46 L573.80,210.46 L574.60,210.47 L575.40,210.32 L576.20,210.47 L577.00,210.48 L577.80,210.48 L578.60,210.48 L579.40,210.48 L580.20,210.34 L581.00,210.49 L581.80,210.49 L582.60,210.49 L583.40,210.50 L584.20,210.50 L585.00,210.50 L585.80,210.51 L586.60,210.23 L587.40,210.51 L588.20,210.51 L589.00,210.52 L589.80,210.38 L590.60,210.52 L591.40,210.52 L592.20,210.53 L593.00,210.53 L593.80,210.53 L594.60,210.37 L595.40,210.54 L596.20,210.54 L597.00,210.30 L597.80,210.54 L598.60,210.55 L599.40,210.55 L600.20,210.55 L601.00,210.55 L601.80,210.33 L602.60,210.32 L603.40,210.56 L604.20,210.56 L605.00,210.56 L605.80,210.53 L606.60,210.57 L607.40,210.57 L608.20,210.48 L609.00,210.58 L609.80,210.58 L610.60,210.58 L611.40,210.43 L612.20,210.48 L613.00,210.59 L613.80,210.59 L614.60,210.59 L615.40,210.59 L616.20,210.34 L617.00,210.46 L617.80,210.54 L618.60,210.60 L619.40,210.61 L620.20,210.61 L621.00,210.61 L621.80,210.61 L622.60,210.61 L623.40,210.62 L624.20,210.62 L625.00,210.62 L625.80,210.62 L626.60,210.62 L627.40,210.61 L628.20,210.63 L629.00,210.63 L629.80,210.37 L630.60,210.64 L631.40,210.64 L632.20,210.64 L633.00,210.64 L633.80,210.64 L634.60,210.65 L635.40,210.65 L636.20,210.65 L637.00,210.65 L637.80,210.65 L638.60,210.66 L639.40,210.54 L640.20,210.66 L641.00,210.66 L641.80,210.66 L642.60,210.67 L643.40,210.67 L644.20,210.50 L645.00,210.67 L645.80,210.67 L646.60,210.67 L647.40,210.68 L648.20,210.68 L649.00,210.68 L649.80,210.68 L650.60,210.68 L651.40,210.69 L652.20,210.49 L653.00,210.69 L653.80,210.69 L654.60,210.69 L655.40,210.69 L656.20,210.62 L657.00,210.60 L657.80,210.55 L658.60,210.55 L659.40,210.70 L660.20,210.71 L661.00,210.71 L661.80,210.71 L662.60,210.56 L663.40,210.71 L664.20,210.71 L665.00,210.72 L665.80,210.72 L666.60,210.72 L667.40,210.72 L668.20,210.72 L669.00,210.72 L669.80,210.73 L670.60,210.73 L671.40,210.73 L672.20,210.73 L673.00,210.73 L673.80,210.73 L674.60,210.74 L675.40,210.61 L676.20,210.74 L677.00,210.74 L677.80,210.74 L678.60,210.74 L679.40,210.75 L680.20,210.75 L681.00,210.75 L681.80,210.75 L682.60,210.75 L683.40,210.75 L684.20,210.67 L685.00,210.76 L685.80,210.76 L686.60,210.76 L687.40,210.76 L688.20,210.76 L689.00,210.76 L689.80,210.62 L690.60,210.75 L691.40,210.77 L692.20,210.77 L693.00,210.77 L693.80,210.77 L694.60,210.77 L695.40,210.78 L696.20,210.78 L697.00,210.62 L697.80,210.78 L698.60,210.78 L699.40,210.78 L700.20,210.78 L701.00,210.79 L701.80,210.79 L702.60,210.79 L703.40,210.79 L704.20,210.79 L705.00,210.79 L705.80,210.79 L706.60,210.80 L707.40,210.80 L708.20,210.80 L709.00,210.75 L709.80,210.80 L710.60,210.80 L711.40,210.80 L712.20,210.80 L713.00,210.81 L713.80,210.81 L714.60,210.81 L715.40,210.81 L716.20,210.81 L717.00,210.81 L717.80,210.81 L718.60,210.82 L719.40,210.68 L720.20,210.82 L721.00,210.82 L721.80,210.78 L722.60,210.82 L723.40,210.73 L724.20,210.82 L725.00,210.83 L725.80,210.83 L726.60,210.83 L727.40,210.83 L728.20,210.83 L729.00,210.83 L729.80,210.83 L730.60,210.83 L731.40,210.83 L732.20,210.84 L733.00,210.77 L733.80,210.84 L734.60,210.84 L735.40,210.84 L736.20,210.84 L737.00,210.84 L737.80,210.84 L738.60,210.85 L739.40,210.85 L740.20,210.85 L741.00,210.85 L741.80,210.85 L742.60,210.85 L743.40,210.85 L744.20,210.85 L745.00,210.85 L745.00,212.75 L744.20,212.75 L743.40,212.75 L742.60,212.75 L741.80,212.75 L741.00,212.75 L740.20,212.75 L739.40,212.75 L738.60,212.75 L737.80,212.76 L737.00,212.76 L736.20,212.84 L735.40,212.76 L734.60,212.86 L733.80,212.76 L733.00,212.76 L732.20,212.76 L731.40,212.77 L730.60,212.77 L729.80,212.77 L729.00,212.77 L728.20,212.77 L727.40,212.77 L726.60,212.77 L725.80,212.77 L725.00,212.77 L724.20,212.78 L723.40,212.78 L722.60,212.78 L721.80,212.78 L721.00,212.78 L720.20,212.78 L719.40,212.80 L718.60,212.78 L717.80,212.79 L717.00,212.79 L716.20,212.79 L715.40,212.79 L714.60,212.79 L713.80,212.79 L713.00,212.79 L712.20,212.80 L711.40,212.80 L710.60,212.80 L709.80,212.80 L709.00,212.80 L708.20,212.80 L707.40,212.80 L706.60,212.80 L705.80,212.81 L705.00,212.81 L704.20,212.87 L703.40,212.96 L702.60,212.81 L701.80,212.93 L701.00,212.91 L700.20,212.82 L699.40,212.82 L698.60,212.82 L697.80,212.82 L697.00,212.82 L696.20,212.82 L695.40,212.82 L694.60,212.83 L693.80,212.83 L693.00,212.89 L692.20,212.83 L691.40,212.83 L690.60,212.83 L689.80,212.83 L689.00,212.84 L688.20,212.94 L687.40,212.84 L686.60,212.97 L685.80,212.84 L685.00,212.84 L684.20,212.86 L683.40,212.85 L682.60,212.85 L681.80,212.85 L681.00,212.90 L680.20,212.85 L679.40,212.85 L678.60,213.01 L677.80,212.87 L677.00,212.87 L676.20,212.86 L675.40,212.86 L674.60,212.86 L673.80,212.87 L673.00,212.87 L672.20,212.87 L671.40,212.87 L670.60,212.87 L669.80,213.02 L669.00,212.88 L668.20,212.88 L667.40,212.88 L666.60,212.88 L665.80,212.88 L665.00,212.88 L664.20,212.89 L663.40,212.89 L662.60,212.89 L661.80,212.89 L661.00,212.89 L660.20,212.89 L659.40,212.90 L658.60,212.90 L657.80,212.90 L657.00,213.02 L656.20,212.90 L655.40,212.91 L654.60,212.91 L653.80,212.91 L653.00,212.91 L652.20,212.91 L651.40,212.91 L650.60,213.06 L649.80,212.92 L649.00,212.92 L648.20,212.92 L647.40,212.92 L646.60,212.93 L645.80,212.93 L645.00,212.93 L644.20,212.95 L643.40,213.15 L642.60,212.93 L641.80,213.00 L641.00,212.94 L640.20,213.08 L639.40,212.94 L638.60,213.04 L637.80,213.14 L637.00,212.95 L636.20,212.95 L635.40,212.95 L634.60,212.95 L633.80,212.96 L633.00,212.96 L632.20,212.96 L631.40,212.96 L630.60,212.96 L629.80,212.97 L629.00,212.97 L628.20,213.18 L627.40,213.10 L626.60,212.98 L625.80,213.24 L625.00,212.98 L624.20,212.98 L623.40,212.98 L622.60,212.99 L621.80,212.99 L621.00,213.18 L620.20,212.99 L619.40,212.99 L618.60,213.14 L617.80,213.00 L617.00,213.00 L616.20,213.00 L615.40,213.01 L614.60,213.01 L613.80,213.01 L613.00,213.19 L612.20,213.01 L611.40,213.02 L610.60,213.02 L609.80,213.02 L609.00,213.02 L608.20,213.03 L607.40,213.03 L606.60,213.03 L605.80,213.03 L605.00,213.04 L604.20,213.04 L603.40,213.04 L602.60,213.04 L601.80,213.04 L601.00,213.05 L600.20,213.05 L599.40,213.06 L598.60,213.05 L597.80,213.06 L597.00,213.06 L596.20,213.27 L595.40,213.06 L594.60,213.38 L593.80,213.07 L593.00,213.07 L592.20,213.08 L591.40,213.08 L590.60,213.08 L589.80,213.24 L589.00,213.08 L588.20,213.09 L587.40,213.11 L586.60,213.09 L585.80,213.09 L585.00,213.10 L584.20,213.10 L583.40,213.28 L582.60,213.35 L581.80,213.21 L581.00,213.21 L580.20,213.13 L579.40,213.12 L578.60,213.12 L577.80,213.12 L577.00,213.12 L576.20,213.13 L575.40,213.41 L574.60,213.13 L573.80,213.33 L573.00,213.14 L572.20,213.14 L571.40,213.14 L570.60,213.15 L569.80,213.15 L569.00,213.15 L568.20,213.16 L567.40,213.16 L566.60,213.16 L565.80,213.36 L565.00,213.53 L564.20,213.17 L563.40,213.17 L562.60,213.18 L561.80,213.18 L561.00,213.38 L560.20,213.18 L559.40,213.19 L558.60,213.57 L557.80,213.19 L557.00,213.20 L556.20,213.20 L555.40,213.20 L554.60,213.29 L553.80,213.21 L553.00,213.57 L552.20,213.22 L551.40,213.22 L550.60,213.22 L549.80,213.22 L549.00,213.27 L548.20,213.23 L547.40,213.49 L546.60,213.45 L545.80,213.24 L545.00,213.24 L544.20,213.59 L543.40,213.25 L542.60,213.25 L541.80,213.58 L541.00,213.26 L540.20,213.26 L539.40,213.27 L538.60,213.27 L537.80,213.27 L537.00,213.28 L536.20,213.28 L535.40,213.28 L534.60,213.29 L533.80,213.64 L533.00,213.29 L532.20,213.30 L531.40,213.30 L530.60,213.30 L529.80,213.78 L529.00,213.73 L528.20,213.58 L527.40,213.41 L526.60,213.32 L525.80,213.33 L525.00,213.33 L524.20,213.41 L523.40,213.34 L522.60,213.34 L521.80,213.46 L521.00,213.67 L520.20,213.35 L519.40,213.85 L518.60,213.36 L517.80,213.36 L517.00,213.86 L516.20,213.37 L515.40,213.37 L514.60,213.63 L513.80,213.38 L513.00,213.39 L512.20,213.39 L511.40,213.39 L510.60,213.40 L509.80,213.40 L509.00,213.68 L508.20,213.62 L507.40,213.41 L506.60,213.90 L505.80,213.42 L505.00,213.43 L504.20,213.43 L503.40,213.87 L502.60,213.48 L501.80,213.44 L501.00,213.68 L500.20,213.95 L499.40,214.01 L498.60,213.69 L497.80,213.80 L497.00,213.54 L496.20,213.99 L495.40,213.48 L494.60,213.60 L493.80,213.48 L493.00,213.49 L492.20,213.49 L491.40,213.56 L490.60,213.80 L489.80,213.51 L489.00,213.51 L488.20,214.00 L487.40,213.52 L486.60,213.52 L485.80,213.86 L485.00,213.53 L484.20,213.98 L483.40,213.54 L482.60,213.55 L481.80,213.55 L481.00,213.82 L480.20,213.74 L479.40,213.82 L478.60,213.57 L477.80,213.70 L477.00,213.83 L476.20,213.99 L475.40,213.59 L474.60,213.72 L473.80,213.60 L473.00,213.60 L472.20,214.20 L471.40,213.61 L470.60,213.77 L469.80,213.62 L469.00,213.83 L468.20,214.28 L467.40,213.64 L466.60,214.18 L465.80,213.78 L465.00,213.65 L464.20,214.08 L463.40,213.95 L462.60,213.67 L461.80,213.67 L461.00,214.13 L460.20,214.00 L459.40,213.69 L458.60,214.25 L457.80,213.98 L457.00,213.96 L456.20,213.78 L455.40,213.71 L454.60,213.74 L453.80,213.72 L453.00,213.77 L452.20,213.74 L451.40,214.41 L450.60,214.21 L449.80,214.06 L449.00,213.76 L448.20,213.92 L447.40,214.09 L446.60,214.14 L445.80,214.03 L445.00,213.99 L444.20,213.79 L443.40,214.39 L442.60,213.93 L441.80,213.89 L441.00,213.81 L440.20,213.82 L439.40,213.82 L438.60,214.03 L437.80,213.84 L437.00,213.97 L436.20,214.17 L435.40,213.96 L434.60,214.03 L433.80,213.87 L433.00,213.87 L432.20,214.37 L431.40,214.53 L430.60,214.08 L429.80,213.92 L429.00,214.34 L428.20,214.40 L427.40,214.38 L426.60,214.72 L425.80,213.93 L425.00,214.60 L424.20,214.70 L423.40,214.23 L422.60,214.11 L421.80,213.96 L421.00,214.38 L420.20,213.97 L419.40,214.28 L418.60,214.64 L417.80,213.99 L417.00,214.72 L416.20,214.73 L415.40,214.77 L414.60,214.10 L413.80,214.80 L413.00,214.80 L412.20,214.92 L411.40,214.28 L410.60,214.05 L409.80,214.06 L409.00,214.28 L408.20,214.18 L407.40,214.08 L406.60,214.37 L405.80,214.09 L405.00,214.97 L404.20,214.97 L403.40,214.11 L402.60,214.40 L401.80,214.82 L401.00,214.92 L400.20,214.51 L399.40,215.13 L398.60,215.12 L397.80,215.07 L397.00,214.17 L396.20,214.90 L395.40,214.89 L394.60,214.19 L393.80,214.53 L393.00,214.84 L392.20,214.21 L391.40,215.17 L390.60,214.59 L389.80,214.39 L389.00,214.66 L388.20,214.25 L387.40,215.03 L386.60,215.12 L385.80,215.16 L385.00,214.28 L384.20,214.29 L383.40,214.30 L382.60,215.32 L381.80,214.90 L381.00,214.32 L380.20,214.87 L379.40,214.63 L378.60,214.88 L377.80,214.35 L377.00,215.40 L376.20,215.43 L375.40,214.41 L374.60,215.14 L373.80,214.39 L373.00,215.05 L372.20,214.65 L371.40,215.50 L370.60,214.77 L369.80,215.32 L369.00,214.86 L368.20,215.29 L367.40,214.97 L366.60,215.35 L365.80,215.33 L365.00,214.53 L364.20,214.49 L363.40,215.31 L362.60,214.52 L361.80,214.89 L361.00,215.34 L360.20,214.77 L359.40,215.33 L358.60,214.91 L357.80,214.56 L357.00,214.68 L356.20,215.23 L355.40,214.69 L354.60,215.03 L353.80,214.62 L353.00,215.77 L352.20,215.89 L351.40,214.64 L350.60,215.81 L349.80,214.82 L349.00,215.61 L348.20,214.71 L347.40,214.99 L346.60,215.70 L345.80,215.33 L345.00,215.47 L344.20,215.21 L343.40,215.24 L342.60,215.46 L341.80,215.72 L341.00,215.58 L340.20,216.08 L339.40,215.48 L338.60,215.29 L337.80,215.28 L337.00,215.30 L336.20,215.77 L335.40,215.16 L334.60,215.38 L333.80,215.09 L333.00,215.88 L332.20,215.86 L331.40,215.67 L330.60,215.62 L329.80,215.42 L329.00,215.64 L328.20,214.99 L327.40,215.45 L326.60,215.79 L325.80,215.59 L325.00,215.16 L324.20,216.25 L323.40,216.28 L322.60,215.17 L321.80,215.48 L321.00,215.19 L320.20,215.21 L319.40,216.34 L318.60,216.38 L317.80,215.17 L317.00,215.37 L316.20,215.39 L315.40,216.11 L314.60,215.95 L313.80,215.60 L313.00,216.33 L312.20,216.20 L311.40,216.31 L310.60,215.80 L309.80,215.93 L309.00,215.62 L308.20,215.60 L307.40,215.71 L306.60,215.80 L305.80,216.27 L305.00,215.39 L304.20,215.87 L303.40,216.14 L302.60,215.86 L301.80,216.18 L301.00,216.16 L300.20,216.42 L299.40,215.60 L298.60,216.36 L297.80,215.97 L297.00,216.13 L296.20,216.06 L295.40,215.77 L294.60,215.99 L293.80,216.03 L293.00,216.48 L292.20,215.99 L291.40,216.92 L290.60,216.58 L289.80,216.68 L289.00,216.16 L288.20,217.08 L287.40,217.10 L286.60,216.90 L285.80,216.66 L285.00,216.72 L284.20,216.10 L283.40,216.43 L282.60,216.75 L281.80,216.70 L281.00,217.48 L280.20,216.92 L279.40,216.31 L278.60,216.57 L277.80,217.27 L277.00,216.30 L276.20,216.38 L275.40,216.11 L274.60,217.43 L273.80,217.38 L273.00,216.50 L272.20,216.77 L271.40,217.27 L270.60,217.40 L269.80,217.51 L269.00,217.40 L268.20,216.57 L267.40,217.57 L266.60,216.52 L265.80,216.63 L265.00,216.78 L264.20,217.94 L263.40,216.51 L262.60,216.56 L261.80,217.57 L261.00,216.70 L260.20,216.52 L259.40,216.66 L258.60,217.64 L257.80,217.81 L257.00,217.87 L256.20,217.38 L255.40,217.83 L254.60,217.06 L253.80,218.15 L253.00,217.58 L252.20,217.19 L251.40,217.90 L250.60,217.36 L249.80,218.22 L249.00,217.18 L248.20,217.62 L247.40,217.30 L246.60,217.97 L245.80,218.14 L245.00,217.54 L244.20,217.06 L243.40,218.32 L242.60,218.09 L241.80,218.68 L241.00,217.23 L240.20,218.52 L239.40,217.67 L238.60,218.40 L237.80,218.55 L237.00,217.90 L236.20,218.24 L235.40,217.43 L234.60,218.35 L233.80,217.65 L233.00,217.42 L232.20,218.50 L231.40,217.50 L230.60,218.63 L229.80,218.53 L229.00,218.88 L228.20,217.50 L227.40,217.50 L226.60,218.60 L225.80,217.93 L225.00,219.24 L224.20,218.59 L223.40,219.06 L222.60,218.99 L221.80,218.66 L221.00,218.44 L220.20,218.53 L219.40,219.46 L218.60,217.97 L217.80,218.91 L217.00,219.29 L216.20,219.25 L215.40,218.58 L214.60,219.61 L213.80,219.51 L213.00,218.90 L212.20,219.30 L211.40,218.73 L210.60,218.88 L209.80,218.32 L209.00,218.32 L208.20,219.61 L207.40,219.25 L206.60,218.31 L205.80,218.81 L205.00,219.10 L204.20,219.14 L203.40,219.83 L202.60,219.82 L201.80,219.86 L201.00,219.13 L200.20,218.88 L199.40,219.65 L198.60,220.02 L197.80,218.72 L197.00,220.24 L196.20,220.04 L195.40,219.90 L194.60,220.08 L193.80,219.88 L193.00,220.38 L192.20,219.39 L191.40,219.85 L190.60,220.56 L189.80,218.93 L189.00,220.66 L188.20,220.67 L187.40,220.24 L186.60,219.51 L185.80,220.00 L185.00,219.18 L184.20,220.96 L183.40,219.62 L182.60,219.73 L181.80,220.60 L181.00,220.66 L180.20,221.11 L179.40,221.17 L178.60,219.52 L177.80,220.48 L177.00,220.95 L176.20,220.71 L175.40,220.78 L174.60,221.40 L173.80,220.86 L173.00,219.84 L172.20,221.47 L171.40,220.85 L170.60,220.85 L169.80,219.85 L169.00,221.29 L168.20,221.37 L167.40,221.43 L166.60,221.79 L165.80,221.39 L165.00,221.89 L164.20,221.49 L163.40,220.75 L162.60,222.04 L161.80,220.95 L161.00,220.76 L160.20,221.58 L159.40,220.68 L158.60,220.75 L157.80,220.96 L157.00,221.86 L156.20,220.55 L155.40,221.49 L154.60,222.44 L153.80,221.63 L153.00,222.14 L152.20,222.36 L151.40,221.98 L150.60,221.87 L149.80,222.22 L149.00,222.61 L148.20,220.81 L147.40,221.04 L146.60,222.12 L145.80,222.44 L145.00,222.31 L144.20,222.96 L143.40,222.18 L142.60,222.03 L141.80,221.53 L141.00,222.86 L140.20,221.36 L139.40,223.24 L138.60,222.17 L137.80,222.83 L137.00,223.23 L136.20,221.78 L135.40,222.95 L134.60,223.58 L133.80,222.20 L133.00,223.45 L132.20,222.55 L131.40,223.26 L130.60,222.90 L129.80,223.50 L129.00,222.98 L128.20,222.55 L127.40,224.04 L126.60,223.58 L125.80,222.85 L125.00,223.40 L124.20,223.83 L123.40,223.78 L122.60,223.22 L121.80,224.42 L121.00,223.12 L120.20,223.75 L119.40,223.08 L118.60,222.84 L117.80,223.55 L117.00,223.37 L116.20,223.39 L115.40,224.13 L114.60,223.46 L113.80,224.44 L113.00,224.13 L112.20,223.95 L111.40,224.27 L110.60,223.03 L109.80,223.09 L109.00,224.26 L108.20,223.84 L107.40,225.03 L106.60,225.16 L105.80,224.08 L105.00,223.35 L104.20,223.73 L103.40,225.44 L102.60,224.49 L101.80,225.75 L101.00,225.19 L100.20,225.45 L99.40,225.42 L98.60,223.90 L97.80,224.10 L97.00,224.30 L96.20,225.22 L95.40,224.64 L94.60,225.72 L93.80,226.08 L93.00,225.83 L92.20,224.20 L91.40,225.79 L90.60,226.58 L89.80,225.89 L89.00,224.79 L88.20,224.56 L87.40,226.54 L86.60,224.81 L85.80,226.43 L85.00,226.74 L84.20,226.51 L83.40,224.94 L82.60,225.59 L81.80,226.25 L81.00,226.16 L80.20,226.91 L79.40,228.15 L78.60,229.39 L77.80,231.23 L77.00,231.53 L76.20,231.78 L75.40,232.62 L74.60,233.39 L73.80,234.29 L73.00,232.56 L72.20,234.77 L71.40,233.22 L70.60,232.86 L69.80,234.39 L69.00,233.85 L68.20,232.91 L67.40,232.92 L66.60,232.88 L65.80,232.64 L65.00,234.26 L64.20,232.43 L63.40,233.14 L62.60,234.73 L61.80,233.02 L61.00,232.44 L60.20,232.93 L59.40,233.92 L58.60,232.45 L57.80,234.45 L57.00,234.41 L56.20,234.55 L55.40,232.42 L54.60,233.97 L53.80,232.70 L53.00,234.44 L52.20,234.41 L51.40,233.28 L50.60,232.89 L49.80,234.67 L49.00,233.14 L48.20,233.79 L47.40,233.64 L46.60,234.44 L45.80,233.80 L45.00,232.68 L44.20,232.71 L43.40,232.96 L42.60,233.69 L41.80,234.12 L41.00,233.12 L40.20,232.53 L39.40,233.37 L38.60,233.42 L37.80,233.63 L37.00,234.52 L36.20,232.70 L35.40,233.12 L34.60,233.39 L33.80,234.31 L33.00,233.91 L32.20,232.84 L31.40,234.10 L30.60,233.85 L29.80,234.26 L29.00,234.58 L28.20,233.58 L27.40,234.63 Z" fill="#ff66b8"/><polyline points="81.2,271.5 153.2,278.1 225.2,283.5 297.3,288 368.8,293.3 440.8,298.5 512.9,303.9 584.4,310 656.4,313.7" fill="none" stroke="#8c2c5c" stroke-width="0.8"/><polyline points="81.2,292.3 153.2,302.1 225.2,306.7 297.3,309.6 368.8,312 440.8,313.2 512.9,314.6 584.4,315.8 656.4,316.4" fill="none" stroke="#907000" stroke-width="0.8"/><circle cx="81.2" cy="271.5" r="0.7" fill="#e070a0"/><circle cx="153.2" cy="278.1" r="0.7" fill="#e070a0"/><circle cx="225.2" cy="283.5" r="0.7" fill="#e070a0"/><circle cx="297.3" cy="288" r="0.7" fill="#e070a0"/><circle cx="368.8" cy="293.3" r="0.7" fill="#e070a0"/><circle cx="440.8" cy="298.5" r="0.7" fill="#e070a0"/><circle cx="512.9" cy="303.9" r="0.7" fill="#e070a0"/><circle cx="584.4" cy="310" r="0.7" fill="#e070a0"/><circle cx="656.4" cy="313.7" r="0.7" fill="#e070a0"/><circle cx="81.2" cy="292.3" r="0.7" fill="#d0a020"/><circle cx="153.2" cy="302.1" r="0.7" fill="#d0a020"/><circle cx="225.2" cy="306.7" r="0.7" fill="#d0a020"/><circle cx="297.3" cy="309.6" r="0.7" fill="#d0a020"/><circle cx="368.8" cy="312" r="0.7" fill="#d0a020"/><circle cx="440.8" cy="313.2" r="0.7" fill="#d0a020"/><circle cx="512.9" cy="314.6" r="0.7" fill="#d0a020"/><circle cx="584.4" cy="315.8" r="0.7" fill="#d0a020"/><circle cx="656.4" cy="316.4" r="0.7" fill="#d0a020"/><text stroke="#e8e8f0" stroke-width="0.05" x="142" y="19.90" font-size="4.2" fill="#e8e8f0" font-family='"Liberation Sans", sans-serif' textLength="62.0" lengthAdjust="spacingAndGlyphs">Remote keyless entry fob signal</text><line x1="142" y1="21.10" x2="204" y2="21.10" stroke="#e0e0e0" stroke-width="0.55"/><line x1="174" y1="21" x2="209" y2="30.6" stroke="#ccc" stroke-width="0.6"/><text stroke="#e8e8f0" stroke-width="0.05" x="87" y="103.30" font-size="4.2" fill="#e8e8f0" font-family='"Liberation Sans", sans-serif' textLength="54.2" lengthAdjust="spacingAndGlyphs">Zoom of the fifth pulse burst</text><line x1="87" y1="104.50" x2="141.2" y2="104.50" stroke="#e0e0e0" stroke-width="0.55"/><line x1="115" y1="104.4" x2="146" y2="115.5" stroke="#ccc" stroke-width="0.6"/><text stroke="#e8e8f0" stroke-width="0.05" x="168" y="198.50" font-size="4.2" fill="#e8e8f0" font-family='"Liberation Sans", sans-serif' textLength="120.6" lengthAdjust="spacingAndGlyphs">Expanded view of the exponential decay at the end of the burst</text><line x1="168" y1="199.70" x2="288.6" y2="199.70" stroke="#e0e0e0" stroke-width="0.55"/><line x1="230.4" y1="199.6" x2="294.4" y2="205.2" stroke="#ccc" stroke-width="0.6"/><text stroke="#e8e8f0" stroke-width="0.05" x="166.8" y="272.00" font-size="4.2" fill="#e8e8f0" font-family='"Liberation Sans", sans-serif' textLength="84.5" lengthAdjust="spacingAndGlyphs">Natural logarithm of the demodulated signal</text><line x1="166.8" y1="273.20" x2="251.3" y2="273.20" stroke="#e0e0e0" stroke-width="0.55"/><line x1="208.7" y1="273.1" x2="256.7" y2="285.9" stroke="#ccc" stroke-width="0.6"/><text stroke="#e8e8f0" stroke-width="0.05" x="165.2" y="301.30" font-size="4.2" fill="#e8e8f0" font-family='"Liberation Sans", sans-serif' textLength="96.8" lengthAdjust="spacingAndGlyphs">Demodulation envelope is this decaying exponential</text><line x1="165.2" y1="302.50" x2="262" y2="302.50" stroke="#e0e0e0" stroke-width="0.55"/><line x1="219.3" y1="302.4" x2="243.3" y2="305.3" stroke="#ccc" stroke-width="0.6"/><text stroke="#d8cfa0" stroke-width="0.18" x="25.8" y="20.01" font-size="4.75" fill="#d8cfa0" font-family='"Liberation Sans", sans-serif' text-anchor="end" font-weight="normal">200 mV</text><text stroke="#d8cfa0" stroke-width="0.18" x="25.8" y="34.21" font-size="4.75" fill="#d8cfa0" font-family='"Liberation Sans", sans-serif' text-anchor="end" font-weight="normal">100 mV</text><text stroke="#d8cfa0" stroke-width="0.18" x="25.8" y="51.51" font-size="4.75" fill="#d8cfa0" font-family='"Liberation Sans", sans-serif' text-anchor="end" font-weight="normal">0 μV</text><text stroke="#d8cfa0" stroke-width="0.18" x="25.8" y="69.51" font-size="4.75" fill="#d8cfa0" font-family='"Liberation Sans", sans-serif' text-anchor="end" font-weight="normal">-100 mV</text><text stroke="#d8cfa0" stroke-width="0.18" x="25.8" y="83.51" font-size="4.75" fill="#d8cfa0" font-family='"Liberation Sans", sans-serif' text-anchor="end" font-weight="normal">-200 mV</text><text stroke="#d2c600" stroke-width="0.18" x="25.8" y="102.81" font-size="4.75" fill="#d2c600" font-family='"Liberation Sans", sans-serif' text-anchor="end" font-weight="normal">169.1 mV</text><text stroke="#d2c600" stroke-width="0.18" x="25.8" y="117.31" font-size="4.75" fill="#d2c600" font-family='"Liberation Sans", sans-serif' text-anchor="end" font-weight="normal">87.1 mV</text><text stroke="#d2c600" stroke-width="0.18" x="25.8" y="134.71" font-size="4.75" fill="#d2c600" font-family='"Liberation Sans", sans-serif' text-anchor="end" font-weight="normal">5.1 mV</text><text stroke="#d2c600" stroke-width="0.18" x="25.8" y="152.41" font-size="4.75" fill="#d2c600" font-family='"Liberation Sans", sans-serif' text-anchor="end" font-weight="normal">-76.9 mV</text><text stroke="#d2c600" stroke-width="0.18" x="25.8" y="166.51" font-size="4.75" fill="#d2c600" font-family='"Liberation Sans", sans-serif' text-anchor="end" font-weight="normal">-158.9 mV</text><text stroke="#d452a4" stroke-width="0.18" x="25.8" y="185.71" font-size="4.75" fill="#d452a4" font-family='"Liberation Sans", sans-serif' text-anchor="end" font-weight="normal">145.1 mV</text><text stroke="#d452a4" stroke-width="0.18" x="25.8" y="199.71" font-size="4.75" fill="#d452a4" font-family='"Liberation Sans", sans-serif' text-anchor="end" font-weight="normal">64.1 mV</text><text stroke="#d452a4" stroke-width="0.18" x="25.8" y="217.21" font-size="4.75" fill="#d452a4" font-family='"Liberation Sans", sans-serif' text-anchor="end" font-weight="normal">-16.9 mV</text><text stroke="#d452a4" stroke-width="0.18" x="25.8" y="234.71" font-size="4.75" fill="#d452a4" font-family='"Liberation Sans", sans-serif' text-anchor="end" font-weight="normal">-97.9 mV</text><text stroke="#d452a4" stroke-width="0.18" x="25.8" y="249.71" font-size="4.75" fill="#d452a4" font-family='"Liberation Sans", sans-serif' text-anchor="end" font-weight="normal">-178.9 mV</text><text stroke="#dc4468" stroke-width="0.18" x="25.8" y="268.91" font-size="4.75" fill="#dc4468" font-family='"Liberation Sans", sans-serif' text-anchor="end" font-weight="normal">-1.507</text><text stroke="#dc4468" stroke-width="0.18" x="25.8" y="282.71" font-size="4.75" fill="#dc4468" font-family='"Liberation Sans", sans-serif' text-anchor="end" font-weight="normal">-2.707</text><text stroke="#dc4468" stroke-width="0.18" x="25.8" y="300.41" font-size="4.75" fill="#dc4468" font-family='"Liberation Sans", sans-serif' text-anchor="end" font-weight="normal">-3.987</text><text stroke="#dc4468" stroke-width="0.18" x="25.8" y="318.11" font-size="4.75" fill="#dc4468" font-family='"Liberation Sans", sans-serif' text-anchor="end" font-weight="normal">-5.187</text><text stroke="#dc4468" stroke-width="0.18" x="25.8" y="332.41" font-size="4.75" fill="#dc4468" font-family='"Liberation Sans", sans-serif' text-anchor="end" font-weight="normal">-6.396</text><text stroke="#d8cfa0" stroke-width="0.18" x="27.8" y="90.41" font-size="4.75" fill="#d8cfa0" font-family='"Liberation Sans", sans-serif' text-anchor="start" font-weight="normal">-4.8 ms</text><text stroke="#d8cfa0" stroke-width="0.18" x="99.475" y="90.41" font-size="4.75" fill="#d8cfa0" font-family='"Liberation Sans", sans-serif' text-anchor="middle" font-weight="normal">200 μs</text><text stroke="#d8cfa0" stroke-width="0.18" x="171.35" y="90.41" font-size="4.75" fill="#d8cfa0" font-family='"Liberation Sans", sans-serif' text-anchor="middle" font-weight="normal">5.2 ms</text><text stroke="#d8cfa0" stroke-width="0.18" x="243.225" y="90.41" font-size="4.75" fill="#d8cfa0" font-family='"Liberation Sans", sans-serif' text-anchor="middle" font-weight="normal">10.2 ms</text><text stroke="#d8cfa0" stroke-width="0.18" x="315.1" y="90.41" font-size="4.75" fill="#d8cfa0" font-family='"Liberation Sans", sans-serif' text-anchor="middle" font-weight="normal">15.2 ms</text><text stroke="#d8cfa0" stroke-width="0.18" x="386.975" y="90.41" font-size="4.75" fill="#d8cfa0" font-family='"Liberation Sans", sans-serif' text-anchor="middle" font-weight="normal">20.2 ms</text><text stroke="#d8cfa0" stroke-width="0.18" x="458.85" y="90.41" font-size="4.75" fill="#d8cfa0" font-family='"Liberation Sans", sans-serif' text-anchor="middle" font-weight="normal">25.2 ms</text><text stroke="#d8cfa0" stroke-width="0.18" x="530.725" y="90.41" font-size="4.75" fill="#d8cfa0" font-family='"Liberation Sans", sans-serif' text-anchor="middle" font-weight="normal">30.2 ms</text><text stroke="#d8cfa0" stroke-width="0.18" x="602.6" y="90.41" font-size="4.75" fill="#d8cfa0" font-family='"Liberation Sans", sans-serif' text-anchor="middle" font-weight="normal">35.2 ms</text><text stroke="#d8cfa0" stroke-width="0.18" x="674.475" y="90.41" font-size="4.75" fill="#d8cfa0" font-family='"Liberation Sans", sans-serif' text-anchor="middle" font-weight="normal">40.2 ms</text><text stroke="#d8cfa0" stroke-width="0.18" x="746" y="90.41" font-size="4.75" fill="#d8cfa0" font-family='"Liberation Sans", sans-serif' text-anchor="end" font-weight="normal">45.2 ms</text><text stroke="#d2c600" stroke-width="0.18" x="27.4" y="173.01" font-size="4.75" fill="#d2c600" font-family='"Liberation Sans", sans-serif' text-anchor="start" font-weight="normal">7.239 ms</text><path d="M25,168.50 l1.6,0.6 l-0.7,0.7 l1.3,1.3" stroke="#d2c600" stroke-width="0.7" fill="none"/><text stroke="#d2c600" stroke-width="0.18" x="99.475" y="173.01" font-size="4.75" fill="#d2c600" font-family='"Liberation Sans", sans-serif' text-anchor="middle" font-weight="normal">7.391 ms</text><text stroke="#d2c600" stroke-width="0.18" x="171.35" y="173.01" font-size="4.75" fill="#d2c600" font-family='"Liberation Sans", sans-serif' text-anchor="middle" font-weight="normal">7.543 ms</text><text stroke="#d2c600" stroke-width="0.18" x="243.225" y="173.01" font-size="4.75" fill="#d2c600" font-family='"Liberation Sans", sans-serif' text-anchor="middle" font-weight="normal">7.695 ms</text><text stroke="#d2c600" stroke-width="0.18" x="315.1" y="173.01" font-size="4.75" fill="#d2c600" font-family='"Liberation Sans", sans-serif' text-anchor="middle" font-weight="normal">7.847 ms</text><text stroke="#d2c600" stroke-width="0.18" x="386.975" y="173.01" font-size="4.75" fill="#d2c600" font-family='"Liberation Sans", sans-serif' text-anchor="middle" font-weight="normal">7.999 ms</text><text stroke="#d2c600" stroke-width="0.18" x="458.85" y="173.01" font-size="4.75" fill="#d2c600" font-family='"Liberation Sans", sans-serif' text-anchor="middle" font-weight="normal">8.151 ms</text><text stroke="#d2c600" stroke-width="0.18" x="530.725" y="173.01" font-size="4.75" fill="#d2c600" font-family='"Liberation Sans", sans-serif' text-anchor="middle" font-weight="normal">8.303 ms</text><text stroke="#d2c600" stroke-width="0.18" x="602.6" y="173.01" font-size="4.75" fill="#d2c600" font-family='"Liberation Sans", sans-serif' text-anchor="middle" font-weight="normal">8.455 ms</text><text stroke="#d2c600" stroke-width="0.18" x="674.475" y="173.01" font-size="4.75" fill="#d2c600" font-family='"Liberation Sans", sans-serif' text-anchor="middle" font-weight="normal">8.607 ms</text><text stroke="#d2c600" stroke-width="0.18" x="746" y="173.01" font-size="4.75" fill="#d2c600" font-family='"Liberation Sans", sans-serif' text-anchor="end" font-weight="normal">8.759 ms</text><text stroke="#d452a4" stroke-width="0.18" x="27.4" y="256.01" font-size="4.75" fill="#d452a4" font-family='"Liberation Sans", sans-serif' text-anchor="start" font-weight="normal">Δ10 μs</text><path d="M25,251.50 l1.6,0.6 l-0.7,0.7 l1.3,1.3" stroke="#d452a4" stroke-width="0.7" fill="none"/><text stroke="#d452a4" stroke-width="0.18" x="99.475" y="256.01" font-size="4.75" fill="#d452a4" font-family='"Liberation Sans", sans-serif' text-anchor="middle" font-weight="normal">Δ8 μs</text><text stroke="#d452a4" stroke-width="0.18" x="171.35" y="256.01" font-size="4.75" fill="#d452a4" font-family='"Liberation Sans", sans-serif' text-anchor="middle" font-weight="normal">Δ6 μs</text><text stroke="#d452a4" stroke-width="0.18" x="243.225" y="256.01" font-size="4.75" fill="#d452a4" font-family='"Liberation Sans", sans-serif' text-anchor="middle" font-weight="normal">Δ4 μs</text><text stroke="#d452a4" stroke-width="0.18" x="315.1" y="256.01" font-size="4.75" fill="#d452a4" font-family='"Liberation Sans", sans-serif' text-anchor="middle" font-weight="normal">Δ2 μs</text><text stroke="#d452a4" stroke-width="0.18" x="458.85" y="256.01" font-size="4.75" fill="#d452a4" font-family='"Liberation Sans", sans-serif' text-anchor="middle" font-weight="normal">Δ2 μs</text><text stroke="#d452a4" stroke-width="0.18" x="530.725" y="256.01" font-size="4.75" fill="#d452a4" font-family='"Liberation Sans", sans-serif' text-anchor="middle" font-weight="normal">Δ4 μs</text><text stroke="#d452a4" stroke-width="0.18" x="602.6" y="256.01" font-size="4.75" fill="#d452a4" font-family='"Liberation Sans", sans-serif' text-anchor="middle" font-weight="normal">Δ6 μs</text><text stroke="#d452a4" stroke-width="0.18" x="674.475" y="256.01" font-size="4.75" fill="#d452a4" font-family='"Liberation Sans", sans-serif' text-anchor="middle" font-weight="normal">Δ8 μs</text><text stroke="#d452a4" stroke-width="0.18" x="746" y="256.01" font-size="4.75" fill="#d452a4" font-family='"Liberation Sans", sans-serif' text-anchor="end" font-weight="normal">Δ10 μs</text><text stroke="#dc4468" stroke-width="0.18" x="27.4" y="338.51" font-size="4.75" fill="#dc4468" font-family='"Liberation Sans", sans-serif' text-anchor="start" font-weight="normal">Δ10 μs</text><path d="M25,334.00 l1.6,0.6 l-0.7,0.7 l1.3,1.3" stroke="#dc4468" stroke-width="0.7" fill="none"/><text stroke="#dc4468" stroke-width="0.18" x="99.475" y="338.51" font-size="4.75" fill="#dc4468" font-family='"Liberation Sans", sans-serif' text-anchor="middle" font-weight="normal">Δ8 μs</text><text stroke="#dc4468" stroke-width="0.18" x="171.35" y="338.51" font-size="4.75" fill="#dc4468" font-family='"Liberation Sans", sans-serif' text-anchor="middle" font-weight="normal">Δ6 μs</text><text stroke="#dc4468" stroke-width="0.18" x="243.225" y="338.51" font-size="4.75" fill="#dc4468" font-family='"Liberation Sans", sans-serif' text-anchor="middle" font-weight="normal">Δ4 μs</text><text stroke="#dc4468" stroke-width="0.18" x="315.1" y="338.51" font-size="4.75" fill="#dc4468" font-family='"Liberation Sans", sans-serif' text-anchor="middle" font-weight="normal">Δ2 μs</text><text stroke="#dc4468" stroke-width="0.18" x="458.85" y="338.51" font-size="4.75" fill="#dc4468" font-family='"Liberation Sans", sans-serif' text-anchor="middle" font-weight="normal">Δ2 μs</text><text stroke="#dc4468" stroke-width="0.18" x="530.725" y="338.51" font-size="4.75" fill="#dc4468" font-family='"Liberation Sans", sans-serif' text-anchor="middle" font-weight="normal">Δ4 μs</text><text stroke="#dc4468" stroke-width="0.18" x="602.6" y="338.51" font-size="4.75" fill="#dc4468" font-family='"Liberation Sans", sans-serif' text-anchor="middle" font-weight="normal">Δ6 μs</text><text stroke="#dc4468" stroke-width="0.18" x="674.475" y="338.51" font-size="4.75" fill="#dc4468" font-family='"Liberation Sans", sans-serif' text-anchor="middle" font-weight="normal">Δ8 μs</text><text stroke="#dc4468" stroke-width="0.18" x="746" y="338.51" font-size="4.75" fill="#dc4468" font-family='"Liberation Sans", sans-serif' text-anchor="end" font-weight="normal">Δ10 μs</text><rect x="21.2" y="44.8" width="6.3" height="4" fill="#f0eca0" rx="0.6"/><text stroke="none" x="24.35" y="47.70" font-size="3.4" fill="#000" font-family='"Liberation Sans", sans-serif' text-anchor="middle">M1</text><rect x="21.8" y="128.5" width="5.7" height="5.5" fill="#e8e000" rx="0.6"/><text stroke="none" x="24.65" y="132.90" font-size="3.4" fill="#000" font-family='"Liberation Sans", sans-serif' text-anchor="middle">Z1</text><rect x="21.0" y="206.4" width="6.3" height="4.6" fill="#f070c0" rx="0.6"/><text stroke="none" x="24.15" y="209.90" font-size="3.4" fill="#502040" font-family='"Liberation Sans", sans-serif' text-anchor="middle">Z2</text><rect x="23" y="210.9" width="4" height="1.4" fill="#c060a0"/><rect x="22.8" y="263.4" width="2.4" height="1.6" fill="#f06088"/><rect x="21.8" y="264.8" width="5.8" height="5.2" fill="#f06088" rx="0.6"/><text stroke="none" x="24.70" y="268.90" font-size="3.4" fill="#401020" font-family='"Liberation Sans", sans-serif' text-anchor="middle">F2</text><path d="M23.2,313 h3.8 v4.8 h-3.8 z" fill="none" stroke="#c09000" stroke-width="0.5"/><rect x="23.4" y="316.9" width="4" height="1.2" fill="#f0b000"/><rect x="373.2" y="244.8" width="27.2" height="4.6" fill="#ee76c0" rx="0.8"/><text stroke="#501840" stroke-width="0.08" x="375.6" y="248.70" font-size="4.7" fill="#501840" font-family='"Liberation Sans", sans-serif' textLength="23" lengthAdjust="spacingAndGlyphs">8.50738 ms</text><rect x="373.2" y="327.9" width="27.2" height="4.6" fill="#ee76c0" rx="0.8"/><text stroke="#501840" stroke-width="0.08" x="375.6" y="331.80" font-size="4.7" fill="#501840" font-family='"Liberation Sans", sans-serif' textLength="23" lengthAdjust="spacingAndGlyphs">8.50738 ms</text><rect x="0" y="0" width="750" height="13.4" fill="#1c1c1c"/><rect x="0" y="13.0" width="750" height="1.0" fill="#0e141a"/><text stroke="none" x="9.9" y="8.9" font-size="6.5" fill="#dfe4ea" font-family='"Liberation Sans", sans-serif' textLength="8.2" lengthAdjust="spacingAndGlyphs">File</text><text stroke="none" x="32.7" y="8.9" font-size="6.5" fill="#dfe4ea" font-family='"Liberation Sans", sans-serif' textLength="17.3" lengthAdjust="spacingAndGlyphs">Vertical</text><text stroke="none" x="64.9" y="8.9" font-size="6.5" fill="#dfe4ea" font-family='"Liberation Sans", sans-serif' textLength="21.9" lengthAdjust="spacingAndGlyphs">Timebase</text><text stroke="none" x="101.2" y="8.9" font-size="6.5" fill="#dfe4ea" font-family='"Liberation Sans", sans-serif' textLength="15.5" lengthAdjust="spacingAndGlyphs">Trigger</text><text stroke="none" x="132" y="8.9" font-size="6.5" fill="#dfe4ea" font-family='"Liberation Sans", sans-serif' textLength="16.7" lengthAdjust="spacingAndGlyphs">Display</text><text stroke="none" x="162.7" y="8.9" font-size="6.5" fill="#dfe4ea" font-family='"Liberation Sans", sans-serif' textLength="18.0" lengthAdjust="spacingAndGlyphs">Cursors</text><text stroke="none" x="195.3" y="8.9" font-size="6.5" fill="#dfe4ea" font-family='"Liberation Sans", sans-serif' textLength="20.0" lengthAdjust="spacingAndGlyphs">Measure</text><text stroke="none" x="230" y="8.9" font-size="6.5" fill="#dfe4ea" font-family='"Liberation Sans", sans-serif' textLength="11.3" lengthAdjust="spacingAndGlyphs">Math</text><text stroke="none" x="256" y="8.9" font-size="6.5" fill="#dfe4ea" font-family='"Liberation Sans", sans-serif' textLength="20.0" lengthAdjust="spacingAndGlyphs">Analysis</text><text stroke="none" x="290.7" y="8.9" font-size="6.5" fill="#dfe4ea" font-family='"Liberation Sans", sans-serif' textLength="16.0" lengthAdjust="spacingAndGlyphs">Utilities</text><text stroke="none" x="322" y="8.9" font-size="6.5" fill="#dfe4ea" font-family='"Liberation Sans", sans-serif' textLength="18.0" lengthAdjust="spacingAndGlyphs">Support</text><rect x="23.1" y="3.0" width="0.8" height="7.6" fill="#2c2c2c"/><rect x="54.300000000000004" y="3.0" width="0.8" height="7.6" fill="#2c2c2c"/><rect x="91.19999999999999" y="3.0" width="0.8" height="7.6" fill="#2c2c2c"/><rect x="120.89999999999999" y="3.0" width="0.8" height="7.6" fill="#2c2c2c"/><rect x="152.9" y="3.0" width="0.8" height="7.6" fill="#2c2c2c"/><rect x="185.6" y="3.0" width="0.8" height="7.6" fill="#2c2c2c"/><rect x="219.6" y="3.0" width="0.8" height="7.6" fill="#2c2c2c"/><rect x="245.9" y="3.0" width="0.8" height="7.6" fill="#2c2c2c"/><rect x="280.3" y="3.0" width="0.8" height="7.6" fill="#2c2c2c"/><rect x="312.0" y="3.0" width="0.8" height="7.6" fill="#2c2c2c"/><rect x="344.5" y="3.0" width="0.8" height="7.6" fill="#2c2c2c"/><path d="M4,3.3 h2.8 l1.2,1.2 v4.5 l-1,1 h-3 l-1.2,-1.2 v-4.3 z" fill="#c8c8c8"/><rect x="4.1" y="6.2" width="2.8" height="2.6" fill="#555"/><path d="M26.8,4 h2.9 v1.1 l-0.6,0.6 v2.2 l0.6,0.6 v1.1 h-2.9 v-1.1 l0.6,-0.6 v-2.2 l-0.6,-0.6 z" fill="#f0f0f0"/><path d="M57.2,6.6 h5.8" stroke="#dcdcdc" stroke-width="0.7"/><path d="M57,6.6 l1.8,-1.4 v2.8 z M63.2,6.6 l-1.8,-1.4 v2.8 z" fill="#dcdcdc"/><path d="M96.6,9.2 v-4.6" stroke="#dcdcdc" stroke-width="0.7"/><path d="M96.6,4.2 l1.2,1.3 h-2.4 z" fill="#dcdcdc"/><rect x="124.1" y="4.8" width="6" height="4.2" rx="1.2" fill="#b8b8b8"/><rect x="125.1" y="5.9" width="1.6" height="2" fill="#555"/><rect x="127.4" y="5.9" width="1.6" height="2" fill="#555"/><path d="M157.2,9 l3.6,-3.8" stroke="#dcdcdc" stroke-width="1.3"/><rect x="189.3" y="4.2" width="3.8" height="5" fill="#b8b8b8"/><path d="M190.2,5.8 h2 M190.2,7.6 h2" stroke="#444" stroke-width="0.6"/><rect x="223" y="4.4" width="4.8" height="4.8" rx="0.7" fill="#dcdcdc"/><rect x="223.8" y="5.1" width="3.2" height="1.5" fill="#555"/><path d="M248.9,4.4 v4.6 h5.6" stroke="#dcdcdc" stroke-width="0.7" fill="none"/><path d="M249.4,7.6 l1.8,-1.6 l1.2,1 l2,-1.6" stroke="#dcdcdc" stroke-width="0.7" fill="none"/><path d="M283.8,4.3 l4.3,4.8 M288.1,4.3 l-4.3,4.8" stroke="#dcdcdc" stroke-width="1.1"/><circle cx="317.4" cy="6.7" r="2.5" fill="#e8e8e8"/><rect x="317" y="5.8" width="0.9" height="2.4" fill="#1c1c1c"/><rect x="317" y="4.6" width="0.9" height="0.8" fill="#1c1c1c"/><rect x="0" y="351.00" width="750" height="6.4" fill="#202020"/><rect x="0" y="351.00" width="750" height="1.0" fill="#2a2a2a"/><rect x="0" y="357.40" width="750" height="6.05" fill="#060606"/><rect x="0" y="363.45" width="750" height="6.4" fill="#202020"/><rect x="0" y="363.45" width="750" height="1.0" fill="#2a2a2a"/><rect x="0" y="369.85" width="750" height="6.05" fill="#060606"/><rect x="0" y="375.90" width="750" height="6.4" fill="#202020"/><rect x="0" y="375.90" width="750" height="1.0" fill="#2a2a2a"/><rect x="0" y="382.30" width="750" height="6.05" fill="#060606"/><rect x="0" y="388.35" width="750" height="6.4" fill="#202020"/><rect x="0" y="388.35" width="750" height="1.0" fill="#2a2a2a"/><text x="2" y="350.3" font-size="5.0" stroke="#e4e4e4" stroke-width="0.06" fill="#e4e4e4" font-family='"Liberation Sans", sans-serif' font-weight="bold">Measure</text><text x="116" y="350.3" font-size="5.0" stroke="#e4e4e4" stroke-width="0.06" fill="#e4e4e4" font-family='"Liberation Sans", sans-serif' text-anchor="end">P1:slew(F2)</text><text x="173" y="350.3" font-size="5.0" stroke="#e4e4e4" stroke-width="0.06" fill="#e4e4e4" font-family='"Liberation Sans", sans-serif' text-anchor="end">P2:1/(P1)</text><text x="231.0" y="350.3" font-size="5.0" stroke="none" fill="#555" font-family='"Liberation Sans", sans-serif' text-anchor="end">P3:- - -</text><text x="288.5" y="350.3" font-size="5.0" stroke="none" fill="#555" font-family='"Liberation Sans", sans-serif' text-anchor="end">P4:- - -</text><text x="346.0" y="350.3" font-size="5.0" stroke="none" fill="#555" font-family='"Liberation Sans", sans-serif' text-anchor="end">P5:- - -</text><text x="403.5" y="350.3" font-size="5.0" stroke="none" fill="#555" font-family='"Liberation Sans", sans-serif' text-anchor="end">P6:- - -</text><text x="461.0" y="350.3" font-size="5.0" stroke="none" fill="#555" font-family='"Liberation Sans", sans-serif' text-anchor="end">P7:- - -</text><text x="518.5" y="350.3" font-size="5.0" stroke="none" fill="#555" font-family='"Liberation Sans", sans-serif' text-anchor="end">P8:- - -</text><text x="576.0" y="350.3" font-size="5.0" stroke="none" fill="#555" font-family='"Liberation Sans", sans-serif' text-anchor="end">P9:- - -</text><text x="633.5" y="350.3" font-size="5.0" stroke="none" fill="#555" font-family='"Liberation Sans", sans-serif' text-anchor="end">P10:- - -</text><text x="691.0" y="350.3" font-size="5.0" stroke="none" fill="#555" font-family='"Liberation Sans", sans-serif' text-anchor="end">P11:- - -</text><text x="748.5" y="350.3" font-size="5.0" stroke="none" fill="#555" font-family='"Liberation Sans", sans-serif' text-anchor="end">P12:- - -</text><text x="2" y="356.80" font-size="5.0" stroke="#e4e4e4" stroke-width="0.06" fill="#e4e4e4" font-family='"Liberation Sans", sans-serif'>value</text><text x="116" y="356.80" font-size="5.0" stroke="#e4e4e4" stroke-width="0.06" fill="#e4e4e4" font-family='"Liberation Sans", sans-serif' text-anchor="end">165.55430927 k1/s</text><text x="173" y="356.80" font-size="5.0" stroke="#e4e4e4" stroke-width="0.06" fill="#e4e4e4" font-family='"Liberation Sans", sans-serif' text-anchor="end">6.8403139273 μs</text><text x="2" y="363.02" font-size="5.0" stroke="#e4e4e4" stroke-width="0.06" fill="#e4e4e4" font-family='"Liberation Sans", sans-serif'>mean</text><text x="116" y="363.02" font-size="5.0" stroke="#e4e4e4" stroke-width="0.06" fill="#e4e4e4" font-family='"Liberation Sans", sans-serif' text-anchor="end">165.55430927 k1/s</text><text x="173" y="363.02" font-size="5.0" stroke="#e4e4e4" stroke-width="0.06" fill="#e4e4e4" font-family='"Liberation Sans", sans-serif' text-anchor="end">6.8403139273 μs</text><text x="2" y="369.24" font-size="5.0" stroke="#e4e4e4" stroke-width="0.06" fill="#e4e4e4" font-family='"Liberation Sans", sans-serif'>min</text><text x="116" y="369.24" font-size="5.0" stroke="#e4e4e4" stroke-width="0.06" fill="#e4e4e4" font-family='"Liberation Sans", sans-serif' text-anchor="end">165.55430927 k1/s</text><text x="173" y="369.24" font-size="5.0" stroke="#e4e4e4" stroke-width="0.06" fill="#e4e4e4" font-family='"Liberation Sans", sans-serif' text-anchor="end">6.8403139273 μs</text><text x="2" y="375.46" font-size="5.0" stroke="#e4e4e4" stroke-width="0.06" fill="#e4e4e4" font-family='"Liberation Sans", sans-serif'>max</text><text x="116" y="375.46" font-size="5.0" stroke="#e4e4e4" stroke-width="0.06" fill="#e4e4e4" font-family='"Liberation Sans", sans-serif' text-anchor="end">165.55430927 k1/s</text><text x="173" y="375.46" font-size="5.0" stroke="#e4e4e4" stroke-width="0.06" fill="#e4e4e4" font-family='"Liberation Sans", sans-serif' text-anchor="end">6.8403139273 μs</text><text x="2" y="381.68" font-size="5.0" stroke="#e4e4e4" stroke-width="0.06" fill="#e4e4e4" font-family='"Liberation Sans", sans-serif'>sdev</text><rect x="112" y="379.78" width="4" height="0.5" fill="#ccc"/><rect x="169" y="379.78" width="4" height="0.5" fill="#ccc"/><text x="2" y="387.90" font-size="5.0" stroke="#e4e4e4" stroke-width="0.06" fill="#e4e4e4" font-family='"Liberation Sans", sans-serif'>num</text><text x="116" y="387.90" font-size="5.0" stroke="#e4e4e4" stroke-width="0.06" fill="#e4e4e4" font-family='"Liberation Sans", sans-serif' text-anchor="end">1</text><text x="173" y="387.90" font-size="5.0" stroke="#e4e4e4" stroke-width="0.06" fill="#e4e4e4" font-family='"Liberation Sans", sans-serif' text-anchor="end">1</text><text x="2" y="394.12" font-size="5.0" stroke="#e4e4e4" stroke-width="0.06" fill="#e4e4e4" font-family='"Liberation Sans", sans-serif'>status</text><path d="M111.5,390.61999999999995 L115.1,394.02 M115.1,390.61999999999995 L111.5,394.02 M111.5,394.02 h3.6" stroke="#d8c800" stroke-width="0.8"/><path d="M169.5,390.61999999999995 L173.10000000000002,394.02 M173.10000000000002,390.61999999999995 L169.5,394.02 M169.5,394.02 h3.6" stroke="#d8c800" stroke-width="0.8"/><rect x="1.6" y="395.4" width="37.9" height="6.0" fill="#f5b400"/><rect x="1.6" y="401.4" width="37.9" height="12.5" fill="#3e3e3e"/><text stroke="none" x="2.8" y="400.3" font-size="5.2" fill="#1a1a1a" font-family='"Liberation Sans", sans-serif'>F1</text><text stroke="none" x="38.3" y="400.3" font-size="5.2" fill="#1a1a1a" font-family='"Liberation Sans", sans-serif' text-anchor="end">demod(Z2)</text><text stroke="none" x="38.3" y="407.1" font-size="5.2" fill="#d6d6d6" font-family='"Liberation Sans", sans-serif' text-anchor="end">40.5 mV/div</text><text stroke="none" x="38.3" y="413.0" font-size="5.2" fill="#d6d6d6" font-family='"Liberation Sans", sans-serif' text-anchor="end">2.00 μs/div</text><rect x="40.2" y="395.4" width="38.7" height="6.0" fill="#f45a8c"/><rect x="40.2" y="401.4" width="38.7" height="12.5" fill="#2a4868"/><rect x="40.6" y="395.79999999999995" width="37.9" height="17.7" fill="none" stroke="#2f78c8" stroke-width="0.8"/><text stroke="none" x="41.4" y="400.3" font-size="5.2" fill="#1a1a1a" font-family='"Liberation Sans", sans-serif'>F2</text><text stroke="none" x="77.7" y="400.3" font-size="5.2" fill="#1a1a1a" font-family='"Liberation Sans", sans-serif' text-anchor="end">ln(F1)</text><text stroke="none" x="77.7" y="407.1" font-size="5.2" fill="#d6d6d6" font-family='"Liberation Sans", sans-serif' text-anchor="end">680e-3/div</text><text stroke="none" x="77.7" y="413.0" font-size="5.2" fill="#d6d6d6" font-family='"Liberation Sans", sans-serif' text-anchor="end">2.00 μs/div</text><rect x="80" y="395.4" width="38.3" height="6.0" fill="#f0f000"/><rect x="80" y="401.4" width="38.3" height="12.5" fill="#3e3e3e"/><text stroke="none" x="81.2" y="400.3" font-size="5.2" fill="#1a1a1a" font-family='"Liberation Sans", sans-serif'>Z1</text><text stroke="none" x="117.1" y="400.3" font-size="5.2" fill="#1a1a1a" font-family='"Liberation Sans", sans-serif' text-anchor="end">zoom(M1)</text><text stroke="none" x="117.1" y="407.1" font-size="5.2" fill="#d6d6d6" font-family='"Liberation Sans", sans-serif' text-anchor="end">41.0 mV/div</text><text stroke="none" x="117.1" y="413.0" font-size="5.2" fill="#d6d6d6" font-family='"Liberation Sans", sans-serif' text-anchor="end">152 μs/div</text><rect x="118.8" y="395.4" width="37.9" height="6.0" fill="#f06ac8"/><rect x="118.8" y="401.4" width="37.9" height="12.5" fill="#3e3e3e"/><text stroke="none" x="120.0" y="400.3" font-size="5.2" fill="#1a1a1a" font-family='"Liberation Sans", sans-serif'>Z2</text><text stroke="none" x="155.5" y="400.3" font-size="5.2" fill="#1a1a1a" font-family='"Liberation Sans", sans-serif' text-anchor="end">zoom(Z1)</text><text stroke="none" x="155.5" y="407.1" font-size="5.2" fill="#d6d6d6" font-family='"Liberation Sans", sans-serif' text-anchor="end">40.5 mV/div</text><text stroke="none" x="155.5" y="413.0" font-size="5.2" fill="#d6d6d6" font-family='"Liberation Sans", sans-serif' text-anchor="end">2.00 μs/div</text><rect x="157.8" y="395.4" width="38.4" height="6.0" fill="#f8f6b0"/><rect x="157.8" y="401.4" width="38.4" height="12.5" fill="#3e3e3e"/><text stroke="none" x="159.0" y="400.3" font-size="5.2" fill="#1a1a1a" font-family='"Liberation Sans", sans-serif'>M1</text><text stroke="none" x="195.0" y="407.1" font-size="5.2" fill="#d6d6d6" font-family='"Liberation Sans", sans-serif' text-anchor="end">50.0 mV/div</text><text stroke="none" x="195.0" y="413.0" font-size="5.2" fill="#d6d6d6" font-family='"Liberation Sans", sans-serif' text-anchor="end">5.00 ms/div</text><rect x="197.6" y="395.8" width="36.6" height="18.6" fill="#000" stroke="#9a9a9a" stroke-width="0.5" stroke-dasharray="1.4 0.9"/><path d="M215.3,401.8 v6.4 M212.1,405 h6.4" stroke="#ffffff" stroke-width="1"/><rect x="642" y="395.4" width="21.9" height="5.6" fill="#00e000"/><rect x="642" y="401" width="21.9" height="13.6" fill="#424242"/><text stroke="none" x="652.9" y="400.2" font-size="5" fill="#000" font-family='"Liberation Sans", sans-serif' font-weight="bold" text-anchor="middle">HD</text><text stroke="none" x="652.9" y="409.9" font-size="5.2" fill="#d6d6d6" font-family='"Liberation Sans", sans-serif' text-anchor="middle">12 Bits</text><rect x="665.2" y="395.4" width="43.7" height="19.2" fill="#424242"/><rect x="665.6" y="395.8" width="42.9" height="5" fill="#ffffff"/><text stroke="none" x="666.8" y="400.2" font-size="5.2" fill="#444" font-family='"Liberation Sans", sans-serif'>Tbase</text><text stroke="none" x="707.6" y="400.2" font-size="5.2" fill="#444" font-family='"Liberation Sans", sans-serif' text-anchor="end">0.0 ms</text><text stroke="none" x="707.6" y="407.1" font-size="5.2" fill="#d6d6d6" font-family='"Liberation Sans", sans-serif' text-anchor="end">5.00 ms/div</text><text stroke="none" x="666.3" y="413.0" font-size="5.2" fill="#d6d6d6" font-family='"Liberation Sans", sans-serif'>25 MS</text><text stroke="none" x="707.6" y="413.0" font-size="5.2" fill="#d6d6d6" font-family='"Liberation Sans", sans-serif' text-anchor="end">500 MS/s</text><rect x="710" y="395.4" width="37.6" height="19.2" fill="#424242"/><rect x="710.4" y="395.8" width="36.8" height="5" fill="#ffffff"/><text stroke="none" x="711.2" y="400.2" font-size="5.2" fill="#444" font-family='"Liberation Sans", sans-serif'>Trigger</text><rect x="730" y="396" width="7" height="4.8" fill="#0a0a0a"/><rect x="738.6" y="396" width="8.6" height="4.8" fill="#0a0a0a" stroke="#ddd" stroke-width="0.4"/><text stroke="none" x="733.5" y="400.1" font-size="4.8" fill="#fff" font-family='"Liberation Sans", sans-serif' text-anchor="middle">C1</text><text stroke="none" x="742.9" y="400.1" font-size="4.8" fill="#fff" font-family='"Liberation Sans", sans-serif' text-anchor="middle">DC</text><text stroke="none" x="711.2" y="407.1" font-size="5.2" fill="#d6d6d6" font-family='"Liberation Sans", sans-serif'>Stop</text><text stroke="none" x="746.8" y="407.1" font-size="5.2" fill="#d6d6d6" font-family='"Liberation Sans", sans-serif' text-anchor="end">0.0 mV</text><text stroke="none" x="711.2" y="413.0" font-size="5.2" fill="#d6d6d6" font-family='"Liberation Sans", sans-serif'>Edge</text><text stroke="none" x="746.8" y="413.0" font-size="5.2" fill="#d6d6d6" font-family='"Liberation Sans", sans-serif' text-anchor="end">Positive</text><rect x="0" y="415.2" width="750" height="6.8" fill="#1c1c1c"/><text stroke="none" x="2.4" y="420.6" font-size="5.3" fill="#f0f0f0" font-family='"Liberation Sans", sans-serif' font-weight="bold" textLength="26.4" lengthAdjust="spacingAndGlyphs">TELEDYNE</text><text stroke="none" x="29.6" y="420.6" font-size="5.3" fill="#b8b8b8" font-family='"Liberation Sans", sans-serif' textLength="18" lengthAdjust="spacingAndGlyphs">LECROY</text><text stroke="none" x="744" y="420.6" font-size="5.2" fill="#e0e0e0" font-family='"Liberation Sans", sans-serif' text-anchor="end">12/25/2021 2:22:54 PM</text><path d="M96.5,84.4 L95.0,88.0 L98.0,88.0 Z" fill="#f0e8b0"/><circle cx="96.5" cy="87" r="0.5" fill="#222"/></svg>
</body></html>
